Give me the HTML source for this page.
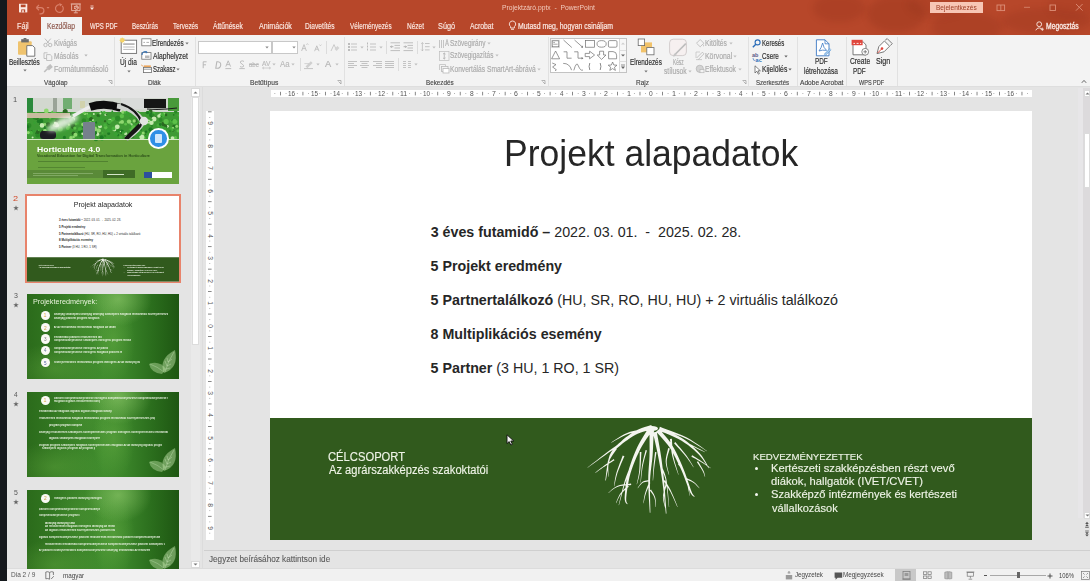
<!DOCTYPE html>
<html><head><meta charset="utf-8">
<style>
*{margin:0;padding:0;box-sizing:border-box}
html,body{width:1090px;height:581px;overflow:hidden;background:#e6e6e6;font-family:"Liberation Sans",sans-serif}
body{position:relative}
.a{position:absolute;white-space:pre}
svg.a{overflow:visible}
</style></head><body>
<div class="a" style="left:0px;top:0px;width:7px;height:581px;background:#15191d"></div>
<div class="a" style="left:7px;top:0px;width:1083px;height:35px;background:#b7472a"></div>
<div class="a" style="left:7px;top:35px;width:1083px;height:52px;background:#f3f3f3"></div>
<div class="a" style="left:7px;top:86px;width:1083px;height:1px;background:#dedede"></div>
<div class="a" style="left:7px;top:87px;width:1083px;height:482px;background:#e4e4e4"></div>
<div class="a" style="left:7px;top:569px;width:1083px;height:12px;background:#f1f1f1"></div>
<div class="a" style="left:7px;top:568px;width:1083px;height:1px;background:#dcdcdc"></div>
<div class="a" style="left:7px;top:0;width:1083px;height:35px;overflow:hidden"><div class="a" style="left:806px;top:-6px;width:52px;height:28px;border-radius:50%;background:rgba(110,25,8,0.13);filter:blur(3px)"></div><div class="a" style="left:860px;top:-4px;width:58px;height:36px;border-radius:50%;background:rgba(110,25,8,0.15);filter:blur(3px)"></div><div class="a" style="left:925px;top:12px;width:70px;height:30px;border-radius:50%;background:rgba(110,25,8,0.12);filter:blur(3px)"></div><div class="a" style="left:900px;top:-8px;width:60px;height:26px;border-radius:50%;background:rgba(110,25,8,0.10);filter:blur(3px)"></div><div class="a" style="left:995px;top:8px;width:90px;height:26px;border-radius:50%;background:rgba(110,25,8,0.12);filter:blur(3px)"></div><div class="a" style="left:1040px;top:-10px;width:50px;height:30px;border-radius:50%;background:rgba(110,25,8,0.08);filter:blur(3px)"></div></div>
<svg class="a" style="left:18px;top:3px;" width="11" height="11" viewBox="0 0 11 11"><rect x="1" y="0.8" width="8.3" height="8.6" fill="#fbe9e3"/><rect x="2.8" y="1.6" width="4.8" height="2.6" fill="#b7472a"/><rect x="3.2" y="6.4" width="4" height="3" fill="#b7472a"/><rect x="4.2" y="7.2" width="1.6" height="2.2" fill="#fbe9e3"/></svg>
<svg class="a" style="left:34px;top:3px;" width="12" height="11" viewBox="0 0 12 11"><path d="M2.2 4.6 L5 2 M2.2 4.6 L5 7.2 M2.4 4.6 H6.8 A3 3 0 0 1 6.8 10.8 H5.5" stroke="#d9806a" stroke-width="1.2" fill="none"/></svg>
<svg class="a" style="left:46px;top:6px;" width="4" height="4" viewBox="0 0 4 4"><path d="M0.5 1 H3.5 L2 2.8Z" fill="#d9806a"/></svg>
<svg class="a" style="left:54px;top:3px;" width="11" height="11" viewBox="0 0 11 11"><path d="M8.2 2.8 A3.9 3.9 0 1 1 5.5 1.6" stroke="#d9806a" stroke-width="1.2" fill="none"/><path d="M5.2 0 L8.4 1.4 L6 3.6Z" fill="#d9806a"/></svg>
<svg class="a" style="left:70px;top:3px;" width="12" height="11" viewBox="0 0 12 11"><path d="M0.8 1 H10.8" stroke="#f6d8ce" stroke-width="0.9"/><path d="M1.6 1.4 V7.6 H10 V1.4" fill="none" stroke="#f6d8ce" stroke-width="0.7"/><circle cx="6.6" cy="4.6" r="1.8" fill="none" stroke="#f6d8ce" stroke-width="0.8"/><path d="M6.6 4.6 L6.6 2.8 M6.6 4.6 L8.2 4.6" stroke="#f6d8ce" stroke-width="0.6"/><path d="M4 3.5 H5 M4 5.5 H5" stroke="#f6d8ce" stroke-width="0.6"/><path d="M5.8 7.6 V9.4 M3.8 9.8 H7.8" stroke="#f6d8ce" stroke-width="0.7"/></svg>
<svg class="a" style="left:89px;top:5px;" width="6" height="6" viewBox="0 0 6 6"><path d="M1.5 1 H4.5" stroke="#fbe9e3" stroke-width="0.8"/><path d="M1 2.6 H5 L3 5Z" fill="#fbe9e3"/></svg>
<div class="a" style="left:502.46px;top:2.59px;font-size:7.6px;line-height:10px;color:#f3cdbf;transform:scaleX(0.8884);transform-origin:0 0;">Projektzáró.pptx  -  PowerPoint</div>
<div class="a" style="left:930px;top:2px;width:53px;height:11px;background:#f7c6b5"></div>
<div class="a" style="left:935.98px;top:2.59px;font-size:7.6px;line-height:10px;color:#9c3b22;transform:scaleX(0.8600);transform-origin:0 0;">Bejelentkezés</div>
<svg class="a" style="left:996px;top:4px;" width="10" height="8" viewBox="0 0 10 8"><rect x="1" y="1" width="7.6" height="5.6" fill="none" stroke="#dc8f78" stroke-width="0.9"/><path d="M4.8 1 V6.6" stroke="#dc8f78" stroke-width="0.9"/></svg>
<svg class="a" style="left:1023px;top:6px;" width="9" height="3" viewBox="0 0 9 3"><path d="M1 1.3 H7" stroke="#d98a74" stroke-width="0.8"/></svg>
<svg class="a" style="left:1049px;top:4px;" width="8" height="8" viewBox="0 0 8 8"><rect x="1" y="1" width="5.5" height="5.5" fill="none" stroke="#dc8f78" stroke-width="0.9"/></svg>
<svg class="a" style="left:1075px;top:3px;" width="9" height="9" viewBox="0 0 9 9"><path d="M1 1 L7.6 7.6 M7.6 1 L1 7.6" stroke="#dc8f78" stroke-width="0.9"/></svg>
<svg class="a" style="left:1035px;top:21px;" width="10" height="10" viewBox="0 0 10 10"><circle cx="4.2" cy="3.2" r="2.4" fill="none" stroke="#f6dcd3" stroke-width="1"/><path d="M0.8 9.3 A3.6 3.6 0 0 1 7.6 9.3" fill="none" stroke="#f6dcd3" stroke-width="1"/><path d="M7.3 6.6 V9.8 M5.7 8.2 H8.9" stroke="#f6dcd3" stroke-width="0.9"/></svg>
<div class="a" style="left:1046.46px;top:20.69px;font-size:8.2px;line-height:11px;color:#fbeee9;transform:scaleX(0.8250);transform-origin:0 0;-webkit-text-stroke:0.3px currentColor;">Megosztás</div>
<div class="a" style="left:41px;top:17px;width:41px;height:18px;background:#f3f3f3"></div>
<div class="a" style="left:16.92px;top:20.59px;font-size:8.4px;line-height:11px;color:#fbe9e3;transform:scaleX(0.8665);transform-origin:0 0;-webkit-text-stroke:0.15px currentColor;">Fájl</div>
<div class="a" style="left:89.90px;top:20.59px;font-size:8.4px;line-height:11px;color:#fbe9e3;transform:scaleX(0.7190);transform-origin:0 0;-webkit-text-stroke:0.15px currentColor;">WPS PDF</div>
<div class="a" style="left:131.80px;top:20.59px;font-size:8.4px;line-height:11px;color:#fbe9e3;transform:scaleX(0.7448);transform-origin:0 0;-webkit-text-stroke:0.15px currentColor;">Beszúrás</div>
<div class="a" style="left:173.27px;top:20.59px;font-size:8.4px;line-height:11px;color:#fbe9e3;transform:scaleX(0.7535);transform-origin:0 0;-webkit-text-stroke:0.15px currentColor;">Tervezés</div>
<div class="a" style="left:213.40px;top:20.59px;font-size:8.4px;line-height:11px;color:#fbe9e3;transform:scaleX(0.7999);transform-origin:0 0;-webkit-text-stroke:0.15px currentColor;">Áttűnések</div>
<div class="a" style="left:258.50px;top:20.59px;font-size:8.4px;line-height:11px;color:#fbe9e3;transform:scaleX(0.8522);transform-origin:0 0;-webkit-text-stroke:0.15px currentColor;">Animációk</div>
<div class="a" style="left:305.47px;top:20.59px;font-size:8.4px;line-height:11px;color:#fbe9e3;transform:scaleX(0.7955);transform-origin:0 0;-webkit-text-stroke:0.15px currentColor;">Diavetítés</div>
<div class="a" style="left:350.00px;top:20.59px;font-size:8.4px;line-height:11px;color:#fbe9e3;transform:scaleX(0.7566);transform-origin:0 0;-webkit-text-stroke:0.15px currentColor;">Véleményezés</div>
<div class="a" style="left:406.98px;top:20.59px;font-size:8.4px;line-height:11px;color:#fbe9e3;transform:scaleX(0.7795);transform-origin:0 0;-webkit-text-stroke:0.15px currentColor;">Nézet</div>
<div class="a" style="left:438.13px;top:20.59px;font-size:8.4px;line-height:11px;color:#fbe9e3;transform:scaleX(0.8730);transform-origin:0 0;-webkit-text-stroke:0.15px currentColor;">Súgó</div>
<div class="a" style="left:470.00px;top:20.59px;font-size:8.4px;line-height:11px;color:#fbe9e3;transform:scaleX(0.8133);transform-origin:0 0;-webkit-text-stroke:0.15px currentColor;">Acrobat</div>
<div class="a" style="left:47.16px;top:20.59px;font-size:8.4px;line-height:11px;color:#8c5448;transform:scaleX(0.7995);transform-origin:0 0;-webkit-text-stroke:0.15px currentColor;">Kezdőlap</div>
<svg class="a" style="left:508px;top:20px;" width="9" height="11" viewBox="0 0 9 11"><path d="M4.4 1 A3.1 3.1 0 0 1 6.4 6.6 V8 H2.6 V6.6 A3.1 3.1 0 0 1 4.4 1Z" fill="none" stroke="#fbe9e3" stroke-width="0.9"/><path d="M3 9.3 H6" stroke="#fbe9e3" stroke-width="0.9"/></svg>
<div class="a" style="left:517.85px;top:20.59px;font-size:8.4px;line-height:11px;color:#fbe9e3;transform:scaleX(0.8230);transform-origin:0 0;-webkit-text-stroke:0.2px currentColor;">Mutasd meg, hogyan csináljam</div>
<div class="a" style="left:114px;top:37px;width:1px;height:49px;background:#e1e1e1"></div>
<div class="a" style="left:194.5px;top:37px;width:1px;height:49px;background:#e1e1e1"></div>
<div class="a" style="left:343.6px;top:37px;width:1px;height:49px;background:#e1e1e1"></div>
<div class="a" style="left:547.5px;top:37px;width:1px;height:49px;background:#e1e1e1"></div>
<div class="a" style="left:747.5px;top:37px;width:1px;height:49px;background:#e1e1e1"></div>
<div class="a" style="left:797px;top:37px;width:1px;height:49px;background:#e1e1e1"></div>
<div class="a" style="left:846px;top:37px;width:1px;height:49px;background:#e1e1e1"></div>
<div class="a" style="left:897px;top:37px;width:1px;height:49px;background:#e1e1e1"></div>
<div class="a" style="left:44.30px;top:76.69px;font-size:8.1px;line-height:11px;color:#484848;transform:scaleX(0.7924);transform-origin:0 0;-webkit-text-stroke:0.18px currentColor;">Vágólap</div>
<div class="a" style="left:147.99px;top:76.69px;font-size:8.1px;line-height:11px;color:#484848;transform:scaleX(0.7909);transform-origin:0 0;-webkit-text-stroke:0.18px currentColor;">Diák</div>
<div class="a" style="left:250.16px;top:76.69px;font-size:8.1px;line-height:11px;color:#484848;transform:scaleX(0.8260);transform-origin:0 0;-webkit-text-stroke:0.18px currentColor;">Betűtípus</div>
<div class="a" style="left:426.20px;top:76.69px;font-size:8.1px;line-height:11px;color:#484848;transform:scaleX(0.7788);transform-origin:0 0;-webkit-text-stroke:0.18px currentColor;">Bekezdés</div>
<div class="a" style="left:636.18px;top:76.69px;font-size:8.1px;line-height:11px;color:#484848;transform:scaleX(0.7988);transform-origin:0 0;-webkit-text-stroke:0.18px currentColor;">Rajz</div>
<div class="a" style="left:756.20px;top:76.69px;font-size:8.1px;line-height:11px;color:#484848;transform:scaleX(0.7518);transform-origin:0 0;-webkit-text-stroke:0.18px currentColor;">Szerkesztés</div>
<div class="a" style="left:800.20px;top:76.69px;font-size:8.1px;line-height:11px;color:#484848;transform:scaleX(0.8180);transform-origin:0 0;-webkit-text-stroke:0.18px currentColor;">Adobe Acrobat</div>
<div class="a" style="left:859.20px;top:76.69px;font-size:8.1px;line-height:11px;color:#484848;transform:scaleX(0.6828);transform-origin:0 0;-webkit-text-stroke:0.18px currentColor;">WPS PDF</div>
<svg class="a" style="left:107.5px;top:80px;" width="5" height="5" viewBox="0 0 5 5"><path d="M0.5 0.5 H4 V4" fill="none" stroke="#9a9a9a" stroke-width="0.7"/><path d="M1.5 1.5 L4 4" stroke="#9a9a9a" stroke-width="0.7"/></svg>
<svg class="a" style="left:336.8px;top:80px;" width="5" height="5" viewBox="0 0 5 5"><path d="M0.5 0.5 H4 V4" fill="none" stroke="#9a9a9a" stroke-width="0.7"/><path d="M1.5 1.5 L4 4" stroke="#9a9a9a" stroke-width="0.7"/></svg>
<svg class="a" style="left:540.6px;top:80px;" width="5" height="5" viewBox="0 0 5 5"><path d="M0.5 0.5 H4 V4" fill="none" stroke="#9a9a9a" stroke-width="0.7"/><path d="M1.5 1.5 L4 4" stroke="#9a9a9a" stroke-width="0.7"/></svg>
<svg class="a" style="left:741.8px;top:80px;" width="5" height="5" viewBox="0 0 5 5"><path d="M0.5 0.5 H4 V4" fill="none" stroke="#9a9a9a" stroke-width="0.7"/><path d="M1.5 1.5 L4 4" stroke="#9a9a9a" stroke-width="0.7"/></svg>
<svg class="a" style="left:16px;top:37px;" width="21" height="21" viewBox="0 0 21 21"><rect x="2" y="4.3" width="13.7" height="13.4" rx="1" fill="#efc36e"/><rect x="5.2" y="2.2" width="7.6" height="3.2" fill="#6c6c6c"/><rect x="7.6" y="1" width="2.8" height="1.6" fill="#6c6c6c"/><path d="M10.8 8.6 H16.6 L18.8 10.8 V19.2 H10.8Z" fill="#fff" stroke="#6a6a6a" stroke-width="0.9"/></svg>
<div class="a" style="left:9.48px;top:56.89px;font-size:8.5px;line-height:11px;color:#303030;transform:scaleX(0.7583);transform-origin:0 0;-webkit-text-stroke:0.18px currentColor;">Beillesztés</div>
<svg class="a" style="left:23px;top:69.3px;" width="4" height="3" viewBox="0 0 4 3"><path d="M0.3 0.6 H3.7 L2 2.5Z" fill="#777"/></svg>
<svg class="a" style="left:43px;top:38px;" width="10" height="10" viewBox="0 0 10 10"><circle cx="2.5" cy="7" r="1.7" fill="none" stroke="#b5b5b5" stroke-width="0.9"/><circle cx="7.2" cy="7" r="1.7" fill="none" stroke="#b5b5b5" stroke-width="0.9"/><path d="M3.5 5.6 L7.8 0.6 M6.2 5.6 L1.9 0.6" stroke="#b5b5b5" stroke-width="0.9"/></svg>
<div class="a" style="left:53.89px;top:37.99px;font-size:8.5px;line-height:11px;color:#ababab;transform:scaleX(0.7570);transform-origin:0 0;-webkit-text-stroke:0.18px currentColor;">Kivágás</div>
<svg class="a" style="left:43px;top:52px;" width="10" height="9" viewBox="0 0 10 9"><path d="M1 0.8 V6.5 H3.5 M1 0.8 H4.5" fill="none" stroke="#b5b5b5" stroke-width="0.8"/><path d="M3.6 2.6 H7.2 L8.8 4.2 V8.5 H3.6Z" fill="none" stroke="#b5b5b5" stroke-width="0.8"/></svg>
<div class="a" style="left:53.87px;top:50.69px;font-size:8.5px;line-height:11px;color:#ababab;transform:scaleX(0.7724);transform-origin:0 0;-webkit-text-stroke:0.18px currentColor;">Másolás</div>
<svg class="a" style="left:83.6px;top:54.4px;" width="4" height="3" viewBox="0 0 4 3"><path d="M0.3 0.6 H3.7 L2 2.5Z" fill="#b5b5b5"/></svg>
<svg class="a" style="left:43px;top:64px;" width="10" height="9" viewBox="0 0 10 9"><path d="M1.2 8 L4.6 4.6" stroke="#c0c0c0" stroke-width="1.6"/><rect x="4" y="1.2" width="5.2" height="4" transform="rotate(-40 6.6 3.2)" fill="#c0c0c0"/></svg>
<div class="a" style="left:53.84px;top:63.79px;font-size:8.5px;line-height:11px;color:#ababab;transform:scaleX(0.8232);transform-origin:0 0;-webkit-text-stroke:0.18px currentColor;">Formátummásoló</div>
<svg class="a" style="left:119px;top:37px;" width="19" height="18" viewBox="0 0 19 18"><rect x="2.2" y="3.2" width="15.4" height="13.2" fill="#fff" stroke="#6f6f6f" stroke-width="0.9"/><rect x="4.2" y="6.2" width="11.4" height="1.8" fill="#b9b9b9"/><path d="M4.2 10 H15.6 M4.2 12.4 H15.6" stroke="#a9a9a9" stroke-width="0.8"/><circle cx="3.3" cy="3.3" r="2.2" fill="#f5cf5b"/><path d="M3.3 0 V6.6 M0 3.3 H6.6 M1 1 L5.6 5.6 M5.6 1 L1 5.6" stroke="#f5d775" stroke-width="0.5"/></svg>
<div class="a" style="left:120.24px;top:56.99px;font-size:8.5px;line-height:11px;color:#303030;transform:scaleX(0.7749);transform-origin:0 0;-webkit-text-stroke:0.18px currentColor;">Új dia</div>
<svg class="a" style="left:126.6px;top:69.5px;" width="4" height="3" viewBox="0 0 4 3"><path d="M0.3 0.6 H3.7 L2 2.5Z" fill="#777"/></svg>
<svg class="a" style="left:141px;top:38px;" width="11" height="9" viewBox="0 0 11 9"><rect x="0.8" y="0.8" width="9.2" height="7" fill="#fff" stroke="#707070" stroke-width="0.8"/><path d="M2.4 4.4 H4 M5.4 4.4 H8" stroke="#9a9a9a" stroke-width="0.8"/></svg>
<div class="a" style="left:152.49px;top:37.69px;font-size:8.5px;line-height:11px;color:#303030;transform:scaleX(0.7458);transform-origin:0 0;-webkit-text-stroke:0.18px currentColor;">Elrendezés</div>
<svg class="a" style="left:185.2px;top:41.7px;" width="4" height="3" viewBox="0 0 4 3"><path d="M0.3 0.6 H3.7 L2 2.5Z" fill="#777"/></svg>
<svg class="a" style="left:141px;top:51px;" width="11" height="9" viewBox="0 0 11 9"><rect x="0.8" y="1.6" width="9.2" height="6.6" fill="#fff" stroke="#707070" stroke-width="0.8"/><path d="M1 4 A3 3 0 0 1 6 1.5" fill="none" stroke="#3b77b8" stroke-width="1.1"/><path d="M5.2 0 L6.8 1.6 L4.8 2.6Z" fill="#3b77b8"/><rect x="4" y="4.5" width="4.5" height="2.5" fill="#b9b9b9"/></svg>
<div class="a" style="left:153.00px;top:50.89px;font-size:8.5px;line-height:11px;color:#303030;transform:scaleX(0.7912);transform-origin:0 0;-webkit-text-stroke:0.18px currentColor;">Alaphelyzet</div>
<svg class="a" style="left:141px;top:64px;" width="11" height="9" viewBox="0 0 11 9"><rect x="2.4" y="3.4" width="8" height="5.2" fill="#fff" stroke="#707070" stroke-width="0.8"/><path d="M2.4 5.2 H10.4" stroke="#707070" stroke-width="0.7"/><rect x="2.8" y="1.4" width="7" height="1.6" fill="#eba55a"/><path d="M0 0.8 L2.4 2.4" stroke="#e8a25c" stroke-width="0.8"/></svg>
<div class="a" style="left:152.70px;top:63.69px;font-size:8.5px;line-height:11px;color:#303030;transform:scaleX(0.7033);transform-origin:0 0;-webkit-text-stroke:0.18px currentColor;">Szakasz</div>
<svg class="a" style="left:176.1px;top:67.7px;" width="4" height="3" viewBox="0 0 4 3"><path d="M0.3 0.6 H3.7 L2 2.5Z" fill="#777"/></svg>
<div class="a" style="left:197.5px;top:41.2px;width:74.3px;height:12.4px;background:#fff;border:1px solid #c8c8c8"></div>
<div class="a" style="left:272.2px;top:41.2px;width:26.3px;height:12.4px;background:#fff;border:1px solid #c8c8c8"></div>
<svg class="a" style="left:265.2px;top:45.8px;" width="4" height="3" viewBox="0 0 4 3"><path d="M0.3 0.6 H3.7 L2 2.5Z" fill="#8a8a8a"/></svg>
<svg class="a" style="left:291.8px;top:45.8px;" width="4" height="3" viewBox="0 0 4 3"><path d="M0.3 0.6 H3.7 L2 2.5Z" fill="#8a8a8a"/></svg>
<svg class="a" style="left:301px;top:43px;" width="8" height="9" viewBox="0 0 8 9"><path d="M0.6 8 L3 1.6 L5.4 8 M1.6 5.6 H4.4" fill="none" stroke="#bdbdbd" stroke-width="0.9"/><path d="M5.4 1.8 L6.4 0.6 L7.4 1.8" fill="none" stroke="#bdbdbd" stroke-width="0.7"/></svg>
<svg class="a" style="left:314px;top:44px;" width="8" height="8" viewBox="0 0 8 8"><path d="M0.6 7.2 L2.8 1.8 L5 7.2 M1.5 5.2 H4.1" fill="none" stroke="#bdbdbd" stroke-width="0.9"/><path d="M5.4 0.6 L6.4 1.8 L7.4 0.6" fill="none" stroke="#bdbdbd" stroke-width="0.7"/></svg>
<div class="a" style="left:325.7px;top:41px;width:1px;height:13px;background:#dcdcdc"></div>
<svg class="a" style="left:330px;top:43px;" width="10" height="9" viewBox="0 0 10 9"><path d="M1 8 L4 1.6 L6 6" fill="none" stroke="#c5c5c5" stroke-width="0.9"/><path d="M4.5 6 L7.4 3 L9.4 5 L6.6 8Z" fill="#d3d3d3"/></svg>
<svg class="a" style="left:201.5px;top:61px;" width="6" height="8" viewBox="0 0 6 8"><path d="M1.2 7.2 V0.8 H4.6 M1.2 3.8 H4" fill="none" stroke="#b8b8b8" stroke-width="1"/></svg>
<svg class="a" style="left:213.5px;top:61px;" width="7" height="8" viewBox="0 0 7 8"><path d="M1.8 7.2 L2.8 0.8 H4 A3 3.2 0 0 1 3.4 7.2Z" fill="none" stroke="#b8b8b8" stroke-width="1.1"/></svg>
<svg class="a" style="left:225px;top:60px;" width="8" height="10" viewBox="0 0 8 10"><path d="M0.8 6.6 L3.2 0.8 L5.6 6.6 M1.6 4.6 H4.8 M0.4 8.6 H6.2" fill="none" stroke="#b8b8b8" stroke-width="0.9"/></svg>
<svg class="a" style="left:238.5px;top:60px;" width="7" height="10" viewBox="0 0 7 10"><path d="M5 1.4 Q3 0.2 1.6 1.4 Q0.6 3 3 4 Q5.4 5.2 4.4 6.6 Q3 7.6 1 6.6 M0.4 8.6 H5.8" fill="none" stroke="#b8b8b8" stroke-width="0.9"/></svg>
<div class="a" style="left:248.76px;top:60.39px;font-size:8.0px;line-height:10px;color:#bbbbbb;transform:scaleX(0.7549);transform-origin:0 0;-webkit-text-stroke:0.18px currentColor;text-decoration:line-through">abc</div>
<div class="a" style="left:262.20px;top:58.89px;font-size:7px;line-height:9px;color:#bbbbbb;transform:scaleX(0.9371);transform-origin:0 0;-webkit-text-stroke:0.18px currentColor;">AV</div>
<svg class="a" style="left:262px;top:66px;" width="9" height="4" viewBox="0 0 9 4"><path d="M0.5 2 H8.5 M0.5 2 L2 0.8 M0.5 2 L2 3.2 M8.5 2 L7 0.8 M8.5 2 L7 3.2" fill="none" stroke="#bbbbbb" stroke-width="0.6"/></svg>
<svg class="a" style="left:272.1px;top:63.099999999999994px;" width="4" height="3" viewBox="0 0 4 3"><path d="M0.3 0.6 H3.7 L2 2.5Z" fill="#c0c0c0"/></svg>
<div class="a" style="left:280.30px;top:59.09px;font-size:8.5px;line-height:11px;color:#bbbbbb;transform:scaleX(0.9278);transform-origin:0 0;-webkit-text-stroke:0.18px currentColor;">Aa</div>
<svg class="a" style="left:291.4px;top:63.099999999999994px;" width="4" height="3" viewBox="0 0 4 3"><path d="M0.3 0.6 H3.7 L2 2.5Z" fill="#c0c0c0"/></svg>
<div class="a" style="left:299.6px;top:58px;width:1px;height:13px;background:#dcdcdc"></div>
<svg class="a" style="left:303px;top:59px;" width="11" height="11" viewBox="0 0 11 11"><path d="M1 9.6 H10" stroke="#c4c4c4" stroke-width="1"/><path d="M2.5 7.4 L7.8 2.2 L9.6 4 L4.4 9.2Z" fill="#cfcfcf"/><path d="M1.4 4.6 H6" stroke="#c9c9c9" stroke-width="0.8"/></svg>
<svg class="a" style="left:315.9px;top:63.099999999999994px;" width="4" height="3" viewBox="0 0 4 3"><path d="M0.3 0.6 H3.7 L2 2.5Z" fill="#c0c0c0"/></svg>
<div class="a" style="left:325.00px;top:59.09px;font-size:8.6px;line-height:11px;color:#b5b5b5;transform:scaleX(1.0760);transform-origin:0 0;-webkit-text-stroke:0.18px currentColor;">A</div>
<svg class="a" style="left:335.2px;top:63.099999999999994px;" width="4" height="3" viewBox="0 0 4 3"><path d="M0.3 0.6 H3.7 L2 2.5Z" fill="#c0c0c0"/></svg>
<svg class="a" style="left:348px;top:42px;" width="9" height="10" viewBox="0 0 9 10"><rect x="0" y="1" width="2" height="2" fill="#bdbdbd"/><rect x="3" y="1.5" width="6" height="1" fill="#c4c4c4"/><rect x="0" y="4" width="2" height="2" fill="#bdbdbd"/><rect x="3" y="4.5" width="6" height="1" fill="#c4c4c4"/><rect x="0" y="7" width="2" height="2" fill="#bdbdbd"/><rect x="3" y="7.5" width="6" height="1" fill="#c4c4c4"/></svg>
<svg class="a" style="left:359.6px;top:45.5px;" width="4" height="3" viewBox="0 0 4 3"><path d="M0.3 0.6 H3.7 L2 2.5Z" fill="#c0c0c0"/></svg>
<svg class="a" style="left:367px;top:42px;" width="9" height="10" viewBox="0 0 9 10"><rect x="0" y="0.5" width="1" height="2" fill="#b9b9b9"/><rect x="3" y="1.5" width="6" height="1" fill="#c4c4c4"/><rect x="0" y="3.5" width="1" height="2" fill="#b9b9b9"/><rect x="3" y="4.5" width="6" height="1" fill="#c4c4c4"/><rect x="0" y="6.5" width="1" height="2" fill="#b9b9b9"/><rect x="3" y="7.5" width="6" height="1" fill="#c4c4c4"/></svg>
<svg class="a" style="left:378.5px;top:45.5px;" width="4" height="3" viewBox="0 0 4 3"><path d="M0.3 0.6 H3.7 L2 2.5Z" fill="#c0c0c0"/></svg>
<div class="a" style="left:386.2px;top:41px;width:1px;height:13px;background:#dcdcdc"></div>
<svg class="a" style="left:390.3px;top:42px;" width="11" height="10" viewBox="0 0 11 10"><path d="M0.5 0.8 H10 M4.5 3.4 H10 M4.5 6 H10 M0.5 8.6 H10" stroke="#b8b8b8" stroke-width="0.9"/><path d="M3.4 4.7 L0.6 4.7 M1.6 3.6 L0.6 4.7 L1.6 5.8" fill="none" stroke="#a0a0a0" stroke-width="0.8"/></svg>
<svg class="a" style="left:403px;top:42px;" width="11" height="10" viewBox="0 0 11 10"><path d="M0.5 0.8 H10 M4.5 3.4 H10 M4.5 6 H10 M0.5 8.6 H10" stroke="#b8b8b8" stroke-width="0.9"/><path d="M0.6 4.7 L3.4 4.7 M2.4 3.6 L3.4 4.7 L2.4 5.8" fill="none" stroke="#a0a0a0" stroke-width="0.8"/></svg>
<div class="a" style="left:417px;top:41px;width:1px;height:13px;background:#dcdcdc"></div>
<svg class="a" style="left:421px;top:42px;" width="9" height="10" viewBox="0 0 9 10"><path d="M1.4 0.6 V8.8 M0.2 1.8 L1.4 0.6 L2.6 1.8 M0.2 7.6 L1.4 8.8 L2.6 7.6" fill="none" stroke="#b5b5b5" stroke-width="0.7"/><path d="M4 1.5 H8.6 M4 4.7 H8.6 M4 7.9 H8.6" stroke="#bdbdbd" stroke-width="0.9"/></svg>
<svg class="a" style="left:432px;top:45.5px;" width="4" height="3" viewBox="0 0 4 3"><path d="M0.3 0.6 H3.7 L2 2.5Z" fill="#c0c0c0"/></svg>
<svg class="a" style="left:348px;top:61px;" width="9" height="8" viewBox="0 0 9 8"><rect x="0" y="0" width="9" height="1" fill="#c2c2c2"/><rect x="0" y="2" width="6" height="1" fill="#c2c2c2"/><rect x="0" y="4" width="9" height="1" fill="#c2c2c2"/><rect x="0" y="6" width="6" height="1" fill="#c2c2c2"/></svg>
<svg class="a" style="left:360px;top:61px;" width="9" height="8" viewBox="0 0 9 8"><rect x="0" y="0" width="9" height="1" fill="#c2c2c2"/><rect x="1.5" y="2" width="6.0" height="1" fill="#c2c2c2"/><rect x="0" y="4" width="9" height="1" fill="#c2c2c2"/><rect x="1.5" y="6" width="6.0" height="1" fill="#c2c2c2"/></svg>
<svg class="a" style="left:373px;top:61px;" width="9" height="8" viewBox="0 0 9 8"><rect x="0" y="0" width="9" height="1" fill="#c2c2c2"/><rect x="3" y="2" width="6" height="1" fill="#c2c2c2"/><rect x="0" y="4" width="9" height="1" fill="#c2c2c2"/><rect x="3" y="6" width="6" height="1" fill="#c2c2c2"/></svg>
<svg class="a" style="left:385px;top:61px;" width="9" height="8" viewBox="0 0 9 8"><rect x="0" y="0" width="9" height="1" fill="#c2c2c2"/><rect x="0" y="2" width="9" height="1" fill="#c2c2c2"/><rect x="0" y="4" width="9" height="1" fill="#c2c2c2"/><rect x="0" y="6" width="9" height="1" fill="#c2c2c2"/></svg>
<div class="a" style="left:398.2px;top:58px;width:1px;height:13px;background:#dcdcdc"></div>
<svg class="a" style="left:403px;top:61px;" width="8" height="8" viewBox="0 0 8 8"><rect x="0" y="0" width="3" height="1" fill="#c4c4c4"/><rect x="0" y="2" width="3" height="1" fill="#c4c4c4"/><rect x="0" y="4" width="3" height="1" fill="#c4c4c4"/><rect x="0" y="6" width="3" height="1" fill="#c4c4c4"/><rect x="5" y="0" width="3" height="1" fill="#c4c4c4"/><rect x="5" y="2" width="3" height="1" fill="#c4c4c4"/><rect x="5" y="4" width="3" height="1" fill="#c4c4c4"/><rect x="5" y="6" width="3" height="1" fill="#c4c4c4"/></svg>
<svg class="a" style="left:413.5px;top:63.099999999999994px;" width="4" height="3" viewBox="0 0 4 3"><path d="M0.3 0.6 H3.7 L2 2.5Z" fill="#c0c0c0"/></svg>
<svg class="a" style="left:439px;top:38px;" width="11" height="11" viewBox="0 0 11 11"><rect x="0" y="2" width="1" height="8" fill="#c4c4c4"/><rect x="2" y="2" width="1" height="8" fill="#c4c4c4"/><rect x="4" y="2" width="1" height="8" fill="#c4c4c4"/><path d="M6.4 8 L8 1.4 L9.6 8 M6.9 5.8 H9.1" fill="none" stroke="#b5b5b5" stroke-width="0.8"/></svg>
<div class="a" style="left:450.08px;top:37.59px;font-size:8.5px;line-height:11px;color:#ababab;transform:scaleX(0.7577);transform-origin:0 0;-webkit-text-stroke:0.18px currentColor;">Szövegirány</div>
<svg class="a" style="left:487.3px;top:41.6px;" width="4" height="3" viewBox="0 0 4 3"><path d="M0.3 0.6 H3.7 L2 2.5Z" fill="#c0c0c0"/></svg>
<svg class="a" style="left:439px;top:51px;" width="11" height="10" viewBox="0 0 11 10"><rect x="0.6" y="0.6" width="9.4" height="8.8" fill="none" stroke="#bdbdbd" stroke-width="0.7"/><path d="M5.3 2 V8 M4 3.2 L5.3 2 L6.6 3.2 M4 6.8 L5.3 8 L6.6 6.8" fill="none" stroke="#a8a8a8" stroke-width="0.7"/></svg>
<div class="a" style="left:450.08px;top:50.29px;font-size:8.5px;line-height:11px;color:#ababab;transform:scaleX(0.7515);transform-origin:0 0;-webkit-text-stroke:0.18px currentColor;">Szövegigazítás</div>
<svg class="a" style="left:495px;top:54.3px;" width="4" height="3" viewBox="0 0 4 3"><path d="M0.3 0.6 H3.7 L2 2.5Z" fill="#c0c0c0"/></svg>
<svg class="a" style="left:439px;top:64px;" width="11" height="10" viewBox="0 0 11 10"><path d="M0.5 0.5 H6.5 V2.5 M0.5 0.5 V6" fill="none" stroke="#c0c0c0" stroke-width="0.8"/><rect x="2.5" y="2.5" width="6.5" height="5" fill="#f3f3f3" stroke="#b8b8b8" stroke-width="0.8"/><rect x="4" y="4.5" width="6" height="4.5" fill="#fff" stroke="#b8b8b8" stroke-width="0.8"/></svg>
<div class="a" style="left:449.87px;top:63.79px;font-size:8.5px;line-height:11px;color:#ababab;transform:scaleX(0.7819);transform-origin:0 0;-webkit-text-stroke:0.18px currentColor;">Konvertálás SmartArt-ábrává</div>
<svg class="a" style="left:537.4px;top:67.8px;" width="4" height="3" viewBox="0 0 4 3"><path d="M0.3 0.6 H3.7 L2 2.5Z" fill="#c0c0c0"/></svg>
<div class="a" style="left:550px;top:38px;width:77px;height:35px;background:#fff"></div>
<div class="a" style="left:619px;top:38px;width:8px;height:35px;background:#f7f7f7"></div>
<div class="a" style="left:619px;top:38px;width:1px;height:35px;background:#d8d8d8"></div>
<div class="a" style="left:619px;top:50px;width:8px;height:1px;background:#dedede"></div>
<div class="a" style="left:619px;top:61px;width:8px;height:1px;background:#dedede"></div>
<div class="a" style="left:550px;top:38px;width:77px;height:35px;border:1px solid #c3c3c3"></div>
<svg class="a" style="left:620px;top:41px;" width="6" height="5" viewBox="0 0 6 5"><path d="M1 3.6 L3 1.4 L5 3.6Z" fill="#cfcfcf"/></svg>
<svg class="a" style="left:620px;top:53px;" width="6" height="5" viewBox="0 0 6 5"><path d="M1 1.4 H5 L3 3.6Z" fill="#666"/></svg>
<svg class="a" style="left:620px;top:64px;" width="6" height="7" viewBox="0 0 6 7"><path d="M1 1 H5" stroke="#666" stroke-width="0.7"/><path d="M1 2.6 H5 L3 5Z" fill="#666"/></svg>
<svg class="a" style="left:550px;top:38px;" width="70" height="35" viewBox="0 0 70 35"><rect x="1" y="1.6" width="9" height="8.5" fill="#e4e4e4"/><rect x="2.2" y="2.8" width="6.6" height="6" fill="#fff" stroke="#6d6d6d" stroke-width="0.7"/><path d="M3.2 4.4 H5 M3.2 6.2 H7.6" stroke="#6d6d6d" stroke-width="0.6"/><path d="M13.5 2 L21.8 9.5" stroke="#6d6d6d" stroke-width="0.7"/><path d="M24.5 2 L32.6 9.2" stroke="#6d6d6d" stroke-width="0.7"/><path d="M31 9.6 L33 9.8 L32.6 7.6Z" fill="#6d6d6d"/><rect x="35.6" y="2.6" width="9" height="6.6" fill="none" stroke="#6d6d6d" stroke-width="0.7"/><ellipse cx="51.6" cy="5.9" rx="4.6" ry="3.3" fill="none" stroke="#6d6d6d" stroke-width="0.7"/><rect x="58.4" y="2.6" width="8.6" height="6.6" rx="1.2" fill="none" stroke="#6d6d6d" stroke-width="0.7"/><path d="M1.6 20.799999999999997 L5.6 13.0 L9.6 20.799999999999997Z" fill="none" stroke="#6d6d6d" stroke-width="0.7"/><path d="M13.6 13.799999999999999 H17 V20.2 H21.6" fill="none" stroke="#6d6d6d" stroke-width="0.7"/><path d="M24.2 13.799999999999999 H28 V20.2 H32.2" fill="none" stroke="#6d6d6d" stroke-width="0.7"/><path d="M31.6 19.0 L33.4 20.2 L31.6 21.4Z" fill="#6d6d6d"/><path d="M35.2 15.399999999999999 H39.6 V13.2 L44.6 17.0 L39.6 20.799999999999997 V18.6 H35.2Z" fill="none" stroke="#6d6d6d" stroke-width="0.7"/><path d="M49.6 13.2 H53.6 V17.0 H56 L51.6 21.4 L47.2 17.0 H49.6Z" fill="none" stroke="#6d6d6d" stroke-width="0.7"/><path d="M58.6 13.6 H63 A4 3.6 0 0 1 66.6 17.2 V20.799999999999997 H58.6Z" fill="none" stroke="#6d6d6d" stroke-width="0.7"/><path d="M2.2 25.0 L6 26.599999999999998 L2.6 29.0 L6.4 31.799999999999997 L5 32.8" fill="none" stroke="#6d6d6d" stroke-width="0.7"/><path d="M13.2 25.4 Q19.6 25.2 21.6 32.2" fill="none" stroke="#6d6d6d" stroke-width="0.7"/><path d="M23.8 32.4 Q26.6 22.4 28.4 28.0 Q30.6 33.4 33 32.0" fill="none" stroke="#6d6d6d" stroke-width="0.7"/><path d="M39.8 25.0 Q38.4 28.4 39.8 32.0" fill="none" stroke="#6d6d6d" stroke-width="0.8"/><path d="M50.2 25.0 Q51.6 28.4 50.2 32.0" fill="none" stroke="#6d6d6d" stroke-width="0.8"/><path d="M62.6 24.0 L63.8 27.0 L67 27.2 L64.5 29.2 L65.4 32.4 L62.6 30.599999999999998 L59.8 32.4 L60.7 29.2 L58.2 27.2 L61.4 27.0Z" fill="none" stroke="#6d6d6d" stroke-width="0.7"/></svg>
<svg class="a" style="left:637px;top:38px;" width="19" height="19" viewBox="0 0 19 19"><rect x="4" y="4.4" width="11" height="10" fill="#f2c36b"/><rect x="1.2" y="1" width="6.4" height="6.6" fill="#fff" stroke="#6b6b6b" stroke-width="0.8"/><rect x="9.8" y="9.6" width="7.2" height="7.2" fill="#fff" stroke="#6b6b6b" stroke-width="0.8"/></svg>
<div class="a" style="left:629.79px;top:56.79px;font-size:8.5px;line-height:11px;color:#303030;transform:scaleX(0.7482);transform-origin:0 0;-webkit-text-stroke:0.18px currentColor;">Elrendezés</div>
<svg class="a" style="left:643.8px;top:69.8px;" width="4" height="3" viewBox="0 0 4 3"><path d="M0.3 0.6 H3.7 L2 2.5Z" fill="#777"/></svg>
<svg class="a" style="left:668px;top:38px;" width="21" height="20" viewBox="0 0 21 20"><rect x="1.6" y="1.2" width="16.8" height="16.4" rx="3.6" fill="#f6f0f0" stroke="#c9c3c3" stroke-width="0.8"/><path d="M7 16.5 L17.8 5.6" stroke="#bdbdbd" stroke-width="1.6"/><path d="M5.4 18.8 Q5 15.4 8 15.2 Q9.6 17.2 5.4 18.8Z" fill="#c6c6c6"/></svg>
<div class="a" style="left:673.32px;top:56.79px;font-size:8.5px;line-height:11px;color:#ababab;transform:scaleX(0.5629);transform-origin:0 0;-webkit-text-stroke:0.18px currentColor;">Kész</div>
<div class="a" style="left:664.00px;top:66.19px;font-size:8.5px;line-height:11px;color:#ababab;transform:scaleX(0.7808);transform-origin:0 0;-webkit-text-stroke:0.18px currentColor;">stílusok</div>
<svg class="a" style="left:688px;top:70.2px;" width="4" height="3" viewBox="0 0 4 3"><path d="M0.3 0.6 H3.7 L2 2.5Z" fill="#c0c0c0"/></svg>
<svg class="a" style="left:694.5px;top:38px;" width="10" height="10" viewBox="0 0 10 10"><path d="M1.5 5.2 L5.2 1.5 L8.8 5.2 L5.2 8.8Z" fill="none" stroke="#b8b8b8" stroke-width="0.8"/><path d="M8.6 6 Q9.6 8 8.6 8.8 Q7.6 8 8.6 6Z" fill="#bdbdbd"/></svg>
<div class="a" style="left:705.26px;top:37.59px;font-size:8.5px;line-height:11px;color:#ababab;transform:scaleX(0.7868);transform-origin:0 0;-webkit-text-stroke:0.18px currentColor;">Kitöltés</div>
<svg class="a" style="left:728.8px;top:41.6px;" width="4" height="3" viewBox="0 0 4 3"><path d="M0.3 0.6 H3.7 L2 2.5Z" fill="#c0c0c0"/></svg>
<svg class="a" style="left:694.5px;top:51px;" width="10" height="10" viewBox="0 0 10 10"><path d="M1 8.6 H7" stroke="#c0c0c0" stroke-width="0.8"/><path d="M1.6 7 L7.4 1.2 L9 2.8 L3.2 8.6" fill="none" stroke="#b8b8b8" stroke-width="0.8"/><path d="M1 1 H5 M1 1 V7" stroke="#c0c0c0" stroke-width="0.7"/></svg>
<div class="a" style="left:705.25px;top:50.69px;font-size:8.5px;line-height:11px;color:#ababab;transform:scaleX(0.8111);transform-origin:0 0;-webkit-text-stroke:0.18px currentColor;">Körvonal</div>
<svg class="a" style="left:733.3px;top:54.7px;" width="4" height="3" viewBox="0 0 4 3"><path d="M0.3 0.6 H3.7 L2 2.5Z" fill="#c0c0c0"/></svg>
<svg class="a" style="left:694.5px;top:64px;" width="10" height="10" viewBox="0 0 10 10"><circle cx="4.8" cy="4.8" r="3.6" fill="#d4d4d4" stroke="#b8b8b8" stroke-width="0.8"/><rect x="5" y="5.5" width="4" height="3.2" fill="#f3f3f3" stroke="#b8b8b8" stroke-width="0.7"/></svg>
<div class="a" style="left:705.27px;top:63.79px;font-size:8.5px;line-height:11px;color:#ababab;transform:scaleX(0.7826);transform-origin:0 0;-webkit-text-stroke:0.18px currentColor;">Effektusok</div>
<svg class="a" style="left:737.7px;top:67.8px;" width="4" height="3" viewBox="0 0 4 3"><path d="M0.3 0.6 H3.7 L2 2.5Z" fill="#c0c0c0"/></svg>
<svg class="a" style="left:751.8px;top:38.5px;" width="9" height="9" viewBox="0 0 9 9"><circle cx="5.6" cy="3.4" r="2.5" fill="none" stroke="#2a6cb8" stroke-width="1.1"/><path d="M3.8 5.2 L0.8 8.2" stroke="#2a6cb8" stroke-width="1.4"/></svg>
<div class="a" style="left:762.31px;top:37.59px;font-size:8.5px;line-height:11px;color:#303030;transform:scaleX(0.7138);transform-origin:0 0;-webkit-text-stroke:0.18px currentColor;">Keresés</div>
<svg class="a" style="left:751.5px;top:51.5px;" width="10" height="10" viewBox="0 0 10 10"><text x="0" y="5" font-size="5.5" font-family="Liberation Sans" fill="#5a5a8a" font-weight="bold">ab</text><text x="3.6" y="9.6" font-size="5.5" font-family="Liberation Sans" fill="#2a6cb8" font-weight="bold">ac</text><path d="M1 6 Q1 9 3.4 8.6" fill="none" stroke="#2a6cb8" stroke-width="0.6"/></svg>
<div class="a" style="left:762.48px;top:50.69px;font-size:8.5px;line-height:11px;color:#303030;transform:scaleX(0.7416);transform-origin:0 0;-webkit-text-stroke:0.18px currentColor;">Csere</div>
<svg class="a" style="left:784px;top:54.7px;" width="4" height="3" viewBox="0 0 4 3"><path d="M0.3 0.6 H3.7 L2 2.5Z" fill="#666"/></svg>
<svg class="a" style="left:753.5px;top:64.5px;" width="7" height="10" viewBox="0 0 7 10"><path d="M1 0.8 V8 L2.8 6.2 L4.4 9.2 L5.4 8.6 L4 5.8 L6.4 5.8Z" fill="#fff" stroke="#555" stroke-width="0.7"/></svg>
<div class="a" style="left:762.26px;top:63.79px;font-size:8.5px;line-height:11px;color:#303030;transform:scaleX(0.7984);transform-origin:0 0;-webkit-text-stroke:0.18px currentColor;">Kijelölés</div>
<svg class="a" style="left:788.2px;top:67.8px;" width="4" height="3" viewBox="0 0 4 3"><path d="M0.3 0.6 H3.7 L2 2.5Z" fill="#666"/></svg>
<svg class="a" style="left:814.5px;top:39px;" width="17" height="18" viewBox="0 0 17 18"><path d="M1.4 0.8 H10 L14 4.8 V16.8 H1.4Z" fill="#fff" stroke="#3b78c4" stroke-width="0.9"/><path d="M10 0.8 V4.8 H14" fill="none" stroke="#3b78c4" stroke-width="0.8"/><path d="M4 12 Q6.4 9 7.6 4 Q8.4 9 11.6 11.4 Q7 10.6 4 12Z" fill="none" stroke="#3b78c4" stroke-width="0.8"/><path d="M9.6 16 L15.6 10" stroke="#5a9ad8" stroke-width="2.2"/><path d="M9.6 16 L15.6 10" stroke="#fff" stroke-width="0.8"/></svg>
<div class="a" style="left:814.69px;top:56.49px;font-size:8.5px;line-height:11px;color:#303030;transform:scaleX(0.7509);transform-origin:0 0;-webkit-text-stroke:0.18px currentColor;">PDF</div>
<div class="a" style="left:804.21px;top:65.69px;font-size:8.5px;line-height:11px;color:#303030;transform:scaleX(0.7690);transform-origin:0 0;-webkit-text-stroke:0.18px currentColor;">létrehozása</div>
<svg class="a" style="left:851px;top:39px;" width="19" height="17" viewBox="0 0 19 17"><path d="M2 3 H12.2 L15 5.8 V15.8 H2Z" fill="#fff" stroke="#6b6b6b" stroke-width="0.9"/><rect x="0.6" y="0.8" width="11" height="5.4" fill="#e0473d"/><path d="M2.4 4.4 H4 M5.6 4.4 H7.6 M9 4.4 H10.2" stroke="#fff" stroke-width="0.9"/><circle cx="14.2" cy="12.8" r="3.4" fill="#fff" stroke="#6b6b6b" stroke-width="0.8"/><path d="M14.2 11 V14.6 M12.4 12.8 H16" stroke="#6b6b6b" stroke-width="0.8"/></svg>
<div class="a" style="left:849.66px;top:56.49px;font-size:8.5px;line-height:11px;color:#303030;transform:scaleX(0.7924);transform-origin:0 0;-webkit-text-stroke:0.18px currentColor;">Create</div>
<div class="a" style="left:853.29px;top:65.69px;font-size:8.5px;line-height:11px;color:#303030;transform:scaleX(0.7447);transform-origin:0 0;-webkit-text-stroke:0.18px currentColor;">PDF</div>
<svg class="a" style="left:875px;top:38px;" width="18" height="18" viewBox="0 0 18 18"><path d="M2 15.6 L3.8 8.6 L9.4 3 L14.6 8.2 L9 13.8Z" fill="#fff" stroke="#6b6b6b" stroke-width="0.9"/><path d="M10.2 2.2 L12.2 0.6 L17.2 5.6 L15.4 7.6" fill="none" stroke="#6b6b6b" stroke-width="0.9"/><path d="M2.6 15 L6.6 11" stroke="#e0473d" stroke-width="1"/><circle cx="7" cy="10.6" r="1.3" fill="#e0473d"/></svg>
<div class="a" style="left:876.14px;top:56.49px;font-size:8.5px;line-height:11px;color:#303030;transform:scaleX(0.8403);transform-origin:0 0;-webkit-text-stroke:0.18px currentColor;">Sign</div>
<svg class="a" style="left:1081px;top:79px;" width="6" height="5" viewBox="0 0 6 5"><path d="M0.8 3.8 L3 1.4 L5.2 3.8" fill="none" stroke="#555" stroke-width="0.9"/></svg>
<div class="a" style="left:201.5px;top:87px;width:1px;height:482px;background:#dcdcdc"></div>
<div class="a" style="left:191px;top:88px;width:8.5px;height:480px;background:#e9e9e9"></div>
<div class="a" style="left:191px;top:88.3px;width:8.5px;height:8.3px;background:#fff;border:1px solid #dadada"></div>
<svg class="a" style="left:192px;top:89px;" width="7" height="7" viewBox="0 0 7 7"><path d="M1.5 4.6 L3.5 2.4 L5.5 4.6Z" fill="#777"/></svg>
<div class="a" style="left:191.5px;top:97px;width:7.5px;height:248px;background:#fff;border:1px solid #dcdcdc"></div>
<div class="a" style="left:191px;top:560.5px;width:8.5px;height:7.5px;background:#fff;border:1px solid #dadada"></div>
<svg class="a" style="left:192px;top:561px;" width="7" height="7" viewBox="0 0 7 7"><path d="M1.5 2.4 H5.5 L3.5 4.6Z" fill="#777"/></svg>
<div class="a" style="left:1083px;top:88px;width:7px;height:430px;background:#dcdadc"></div>
<div class="a" style="left:1078px;top:88px;width:5px;height:430px;background:#e7e6e8"></div>
<div class="a" style="left:1083.5px;top:89.5px;width:6.5px;height:7.5px;background:#fff;border:1px solid #dadada"></div>
<svg class="a" style="left:1083.5px;top:90px;" width="7" height="7" viewBox="0 0 7 7"><path d="M1.5 4.6 L3.5 2.4 L5.5 4.6Z" fill="#777"/></svg>
<div class="a" style="left:1083.5px;top:133.4px;width:6.5px;height:55px;background:#fff;border:1px solid #dcdcdc"></div>
<div class="a" style="left:1083.5px;top:511.5px;width:6.5px;height:7px;background:#fff;border:1px solid #dadada"></div>
<svg class="a" style="left:1083.5px;top:512px;" width="7" height="7" viewBox="0 0 7 7"><path d="M1.5 2.4 H5.5 L3.5 4.6Z" fill="#777"/></svg>
<svg class="a" style="left:1084px;top:521px;" width="6" height="8" viewBox="0 0 6 8"><path d="M3 0.8 L1.2 3 H4.8Z M3 3 L1.2 5.2 H4.8Z" fill="#555"/><path d="M1.2 6.4 H4.8" stroke="#555" stroke-width="0.8"/></svg>
<svg class="a" style="left:1084px;top:530px;" width="6" height="8" viewBox="0 0 6 8"><path d="M1.2 1 H4.8" stroke="#555" stroke-width="0.8"/><path d="M1.2 2.2 H4.8 L3 4.4Z M1.2 4.4 H4.8 L3 6.6Z" fill="#555"/></svg>
<div class="a" style="left:271px;top:90px;width:761px;height:7.3px;background:#fff"></div>
<svg class="a" style="left:271px;top:90px;" width="761" height="8" viewBox="0 0 761 8"><rect x="3.43" y="3.2" width="0.8" height="0.8" fill="#8a8a8a"/><rect x="9.05" y="1.8" width="0.8" height="3.6" fill="#6a6a6a"/><rect x="14.66" y="3.2" width="0.8" height="0.8" fill="#8a8a8a"/><rect x="25.90" y="3.2" width="0.8" height="0.8" fill="#8a8a8a"/><rect x="31.52" y="1.8" width="0.8" height="3.6" fill="#6a6a6a"/><rect x="37.13" y="3.2" width="0.8" height="0.8" fill="#8a8a8a"/><rect x="48.37" y="3.2" width="0.8" height="0.8" fill="#8a8a8a"/><rect x="53.99" y="1.8" width="0.8" height="3.6" fill="#6a6a6a"/><rect x="59.60" y="3.2" width="0.8" height="0.8" fill="#8a8a8a"/><rect x="70.84" y="3.2" width="0.8" height="0.8" fill="#8a8a8a"/><rect x="76.46" y="1.8" width="0.8" height="3.6" fill="#6a6a6a"/><rect x="82.07" y="3.2" width="0.8" height="0.8" fill="#8a8a8a"/><rect x="93.31" y="3.2" width="0.8" height="0.8" fill="#8a8a8a"/><rect x="98.93" y="1.8" width="0.8" height="3.6" fill="#6a6a6a"/><rect x="104.54" y="3.2" width="0.8" height="0.8" fill="#8a8a8a"/><rect x="115.78" y="3.2" width="0.8" height="0.8" fill="#8a8a8a"/><rect x="121.40" y="1.8" width="0.8" height="3.6" fill="#6a6a6a"/><rect x="127.01" y="3.2" width="0.8" height="0.8" fill="#8a8a8a"/><rect x="138.25" y="3.2" width="0.8" height="0.8" fill="#8a8a8a"/><rect x="143.87" y="1.8" width="0.8" height="3.6" fill="#6a6a6a"/><rect x="149.48" y="3.2" width="0.8" height="0.8" fill="#8a8a8a"/><rect x="160.72" y="3.2" width="0.8" height="0.8" fill="#8a8a8a"/><rect x="166.34" y="1.8" width="0.8" height="3.6" fill="#6a6a6a"/><rect x="171.95" y="3.2" width="0.8" height="0.8" fill="#8a8a8a"/><rect x="183.19" y="3.2" width="0.8" height="0.8" fill="#8a8a8a"/><rect x="188.81" y="1.8" width="0.8" height="3.6" fill="#6a6a6a"/><rect x="194.42" y="3.2" width="0.8" height="0.8" fill="#8a8a8a"/><rect x="205.66" y="3.2" width="0.8" height="0.8" fill="#8a8a8a"/><rect x="211.28" y="1.8" width="0.8" height="3.6" fill="#6a6a6a"/><rect x="216.89" y="3.2" width="0.8" height="0.8" fill="#8a8a8a"/><rect x="228.13" y="3.2" width="0.8" height="0.8" fill="#8a8a8a"/><rect x="233.75" y="1.8" width="0.8" height="3.6" fill="#6a6a6a"/><rect x="239.36" y="3.2" width="0.8" height="0.8" fill="#8a8a8a"/><rect x="250.60" y="3.2" width="0.8" height="0.8" fill="#8a8a8a"/><rect x="256.22" y="1.8" width="0.8" height="3.6" fill="#6a6a6a"/><rect x="261.83" y="3.2" width="0.8" height="0.8" fill="#8a8a8a"/><rect x="273.07" y="3.2" width="0.8" height="0.8" fill="#8a8a8a"/><rect x="278.69" y="1.8" width="0.8" height="3.6" fill="#6a6a6a"/><rect x="284.30" y="3.2" width="0.8" height="0.8" fill="#8a8a8a"/><rect x="295.54" y="3.2" width="0.8" height="0.8" fill="#8a8a8a"/><rect x="301.16" y="1.8" width="0.8" height="3.6" fill="#6a6a6a"/><rect x="306.77" y="3.2" width="0.8" height="0.8" fill="#8a8a8a"/><rect x="318.01" y="3.2" width="0.8" height="0.8" fill="#8a8a8a"/><rect x="323.63" y="1.8" width="0.8" height="3.6" fill="#6a6a6a"/><rect x="329.24" y="3.2" width="0.8" height="0.8" fill="#8a8a8a"/><rect x="340.48" y="3.2" width="0.8" height="0.8" fill="#8a8a8a"/><rect x="346.10" y="1.8" width="0.8" height="3.6" fill="#6a6a6a"/><rect x="351.71" y="3.2" width="0.8" height="0.8" fill="#8a8a8a"/><rect x="362.95" y="3.2" width="0.8" height="0.8" fill="#8a8a8a"/><rect x="368.57" y="1.8" width="0.8" height="3.6" fill="#6a6a6a"/><rect x="374.18" y="3.2" width="0.8" height="0.8" fill="#8a8a8a"/><rect x="385.42" y="3.2" width="0.8" height="0.8" fill="#8a8a8a"/><rect x="391.04" y="1.8" width="0.8" height="3.6" fill="#6a6a6a"/><rect x="396.65" y="3.2" width="0.8" height="0.8" fill="#8a8a8a"/><rect x="407.89" y="3.2" width="0.8" height="0.8" fill="#8a8a8a"/><rect x="413.51" y="1.8" width="0.8" height="3.6" fill="#6a6a6a"/><rect x="419.12" y="3.2" width="0.8" height="0.8" fill="#8a8a8a"/><rect x="430.36" y="3.2" width="0.8" height="0.8" fill="#8a8a8a"/><rect x="435.98" y="1.8" width="0.8" height="3.6" fill="#6a6a6a"/><rect x="441.59" y="3.2" width="0.8" height="0.8" fill="#8a8a8a"/><rect x="452.83" y="3.2" width="0.8" height="0.8" fill="#8a8a8a"/><rect x="458.45" y="1.8" width="0.8" height="3.6" fill="#6a6a6a"/><rect x="464.06" y="3.2" width="0.8" height="0.8" fill="#8a8a8a"/><rect x="475.30" y="3.2" width="0.8" height="0.8" fill="#8a8a8a"/><rect x="480.92" y="1.8" width="0.8" height="3.6" fill="#6a6a6a"/><rect x="486.53" y="3.2" width="0.8" height="0.8" fill="#8a8a8a"/><rect x="497.77" y="3.2" width="0.8" height="0.8" fill="#8a8a8a"/><rect x="503.39" y="1.8" width="0.8" height="3.6" fill="#6a6a6a"/><rect x="509.00" y="3.2" width="0.8" height="0.8" fill="#8a8a8a"/><rect x="520.24" y="3.2" width="0.8" height="0.8" fill="#8a8a8a"/><rect x="525.86" y="1.8" width="0.8" height="3.6" fill="#6a6a6a"/><rect x="531.47" y="3.2" width="0.8" height="0.8" fill="#8a8a8a"/><rect x="542.71" y="3.2" width="0.8" height="0.8" fill="#8a8a8a"/><rect x="548.33" y="1.8" width="0.8" height="3.6" fill="#6a6a6a"/><rect x="553.94" y="3.2" width="0.8" height="0.8" fill="#8a8a8a"/><rect x="565.18" y="3.2" width="0.8" height="0.8" fill="#8a8a8a"/><rect x="570.80" y="1.8" width="0.8" height="3.6" fill="#6a6a6a"/><rect x="576.41" y="3.2" width="0.8" height="0.8" fill="#8a8a8a"/><rect x="587.65" y="3.2" width="0.8" height="0.8" fill="#8a8a8a"/><rect x="593.27" y="1.8" width="0.8" height="3.6" fill="#6a6a6a"/><rect x="598.88" y="3.2" width="0.8" height="0.8" fill="#8a8a8a"/><rect x="610.12" y="3.2" width="0.8" height="0.8" fill="#8a8a8a"/><rect x="615.74" y="1.8" width="0.8" height="3.6" fill="#6a6a6a"/><rect x="621.35" y="3.2" width="0.8" height="0.8" fill="#8a8a8a"/><rect x="632.59" y="3.2" width="0.8" height="0.8" fill="#8a8a8a"/><rect x="638.21" y="1.8" width="0.8" height="3.6" fill="#6a6a6a"/><rect x="643.82" y="3.2" width="0.8" height="0.8" fill="#8a8a8a"/><rect x="655.06" y="3.2" width="0.8" height="0.8" fill="#8a8a8a"/><rect x="660.68" y="1.8" width="0.8" height="3.6" fill="#6a6a6a"/><rect x="666.29" y="3.2" width="0.8" height="0.8" fill="#8a8a8a"/><rect x="677.53" y="3.2" width="0.8" height="0.8" fill="#8a8a8a"/><rect x="683.15" y="1.8" width="0.8" height="3.6" fill="#6a6a6a"/><rect x="688.76" y="3.2" width="0.8" height="0.8" fill="#8a8a8a"/><rect x="700.00" y="3.2" width="0.8" height="0.8" fill="#8a8a8a"/><rect x="705.62" y="1.8" width="0.8" height="3.6" fill="#6a6a6a"/><rect x="711.23" y="3.2" width="0.8" height="0.8" fill="#8a8a8a"/><rect x="722.47" y="3.2" width="0.8" height="0.8" fill="#8a8a8a"/><rect x="728.09" y="1.8" width="0.8" height="3.6" fill="#6a6a6a"/><rect x="733.70" y="3.2" width="0.8" height="0.8" fill="#8a8a8a"/><rect x="744.94" y="3.2" width="0.8" height="0.8" fill="#8a8a8a"/><rect x="750.56" y="1.8" width="0.8" height="3.6" fill="#6a6a6a"/><rect x="756.17" y="3.2" width="0.8" height="0.8" fill="#8a8a8a"/></svg>
<div class="a" style="left:288.03px;top:89.09px;font-size:6.6px;line-height:9px;color:#555;transform:scaleX(0.9697);transform-origin:0 0;">16</div>
<div class="a" style="left:310.51px;top:89.09px;font-size:6.6px;line-height:9px;color:#555;transform:scaleX(0.9601);transform-origin:0 0;">15</div>
<div class="a" style="left:332.98px;top:89.09px;font-size:6.6px;line-height:9px;color:#555;transform:scaleX(0.9507);transform-origin:0 0;">14</div>
<div class="a" style="left:355.44px;top:89.09px;font-size:6.6px;line-height:9px;color:#555;transform:scaleX(0.9697);transform-origin:0 0;">13</div>
<div class="a" style="left:377.91px;top:89.09px;font-size:6.6px;line-height:9px;color:#555;transform:scaleX(0.9697);transform-origin:0 0;">12</div>
<div class="a" style="left:400.34px;top:89.09px;font-size:6.6px;line-height:9px;color:#555;transform:scaleX(1.0540);transform-origin:0 0;">11</div>
<div class="a" style="left:422.86px;top:89.09px;font-size:6.6px;line-height:9px;color:#555;transform:scaleX(0.9601);transform-origin:0 0;">10</div>
<div class="a" style="left:447.10px;top:89.09px;font-size:6.6px;line-height:9px;color:#555;transform:scaleX(1.0316);transform-origin:0 0;">9</div>
<div class="a" style="left:469.57px;top:89.09px;font-size:6.6px;line-height:9px;color:#555;transform:scaleX(1.0101);transform-origin:0 0;">8</div>
<div class="a" style="left:491.96px;top:89.09px;font-size:6.6px;line-height:9px;color:#555;transform:scaleX(1.0540);transform-origin:0 0;">7</div>
<div class="a" style="left:514.43px;top:89.09px;font-size:6.6px;line-height:9px;color:#555;transform:scaleX(1.0540);transform-origin:0 0;">6</div>
<div class="a" style="left:536.98px;top:89.09px;font-size:6.6px;line-height:9px;color:#555;transform:scaleX(1.0101);transform-origin:0 0;">5</div>
<div class="a" style="left:559.59px;top:89.09px;font-size:6.6px;line-height:9px;color:#555;transform:scaleX(0.9507);transform-origin:0 0;">4</div>
<div class="a" style="left:581.92px;top:89.09px;font-size:6.6px;line-height:9px;color:#555;transform:scaleX(1.0316);transform-origin:0 0;">3</div>
<div class="a" style="left:604.31px;top:89.09px;font-size:6.6px;line-height:9px;color:#555;transform:scaleX(1.0540);transform-origin:0 0;">2</div>
<div class="a" style="left:626.62px;top:89.09px;font-size:6.6px;line-height:9px;color:#555;transform:scaleX(1.1019);transform-origin:0 0;">1</div>
<div class="a" style="left:671.56px;top:89.09px;font-size:6.6px;line-height:9px;color:#555;transform:scaleX(1.1019);transform-origin:0 0;">1</div>
<div class="a" style="left:694.19px;top:89.09px;font-size:6.6px;line-height:9px;color:#555;transform:scaleX(1.0540);transform-origin:0 0;">2</div>
<div class="a" style="left:716.74px;top:89.09px;font-size:6.6px;line-height:9px;color:#555;transform:scaleX(1.0316);transform-origin:0 0;">3</div>
<div class="a" style="left:739.35px;top:89.09px;font-size:6.6px;line-height:9px;color:#555;transform:scaleX(0.9507);transform-origin:0 0;">4</div>
<div class="a" style="left:761.68px;top:89.09px;font-size:6.6px;line-height:9px;color:#555;transform:scaleX(1.0101);transform-origin:0 0;">5</div>
<div class="a" style="left:784.07px;top:89.09px;font-size:6.6px;line-height:9px;color:#555;transform:scaleX(1.0540);transform-origin:0 0;">6</div>
<div class="a" style="left:806.54px;top:89.09px;font-size:6.6px;line-height:9px;color:#555;transform:scaleX(1.0540);transform-origin:0 0;">7</div>
<div class="a" style="left:829.09px;top:89.09px;font-size:6.6px;line-height:9px;color:#555;transform:scaleX(1.0101);transform-origin:0 0;">8</div>
<div class="a" style="left:851.56px;top:89.09px;font-size:6.6px;line-height:9px;color:#555;transform:scaleX(1.0316);transform-origin:0 0;">9</div>
<div class="a" style="left:872.26px;top:89.09px;font-size:6.6px;line-height:9px;color:#555;transform:scaleX(0.9601);transform-origin:0 0;">10</div>
<div class="a" style="left:894.68px;top:89.09px;font-size:6.6px;line-height:9px;color:#555;transform:scaleX(1.0540);transform-origin:0 0;">11</div>
<div class="a" style="left:917.19px;top:89.09px;font-size:6.6px;line-height:9px;color:#555;transform:scaleX(0.9697);transform-origin:0 0;">12</div>
<div class="a" style="left:939.66px;top:89.09px;font-size:6.6px;line-height:9px;color:#555;transform:scaleX(0.9697);transform-origin:0 0;">13</div>
<div class="a" style="left:962.14px;top:89.09px;font-size:6.6px;line-height:9px;color:#555;transform:scaleX(0.9507);transform-origin:0 0;">14</div>
<div class="a" style="left:984.61px;top:89.09px;font-size:6.6px;line-height:9px;color:#555;transform:scaleX(0.9601);transform-origin:0 0;">15</div>
<div class="a" style="left:1007.07px;top:89.09px;font-size:6.6px;line-height:9px;color:#555;transform:scaleX(0.9697);transform-origin:0 0;">16</div>
<div class="a" style="left:649.33px;top:89.09px;font-size:6.6px;line-height:9px;color:#555;transform:scaleX(1.0101);transform-origin:0 0;">0</div>
<div class="a" style="left:206px;top:111.3px;width:7.5px;height:428.4px;background:#fff"></div>
<svg class="a" style="left:206px;top:111.3px;" width="8" height="429" viewBox="0 0 8 429"><rect x="2" y="0.44" width="3.6" height="0.8" fill="#6a6a6a"/><rect x="3.4" y="6.05" width="0.8" height="0.8" fill="#8a8a8a"/><rect x="3.4" y="17.29" width="0.8" height="0.8" fill="#8a8a8a"/><rect x="2" y="22.91" width="3.6" height="0.8" fill="#6a6a6a"/><rect x="3.4" y="28.52" width="0.8" height="0.8" fill="#8a8a8a"/><rect x="3.4" y="39.76" width="0.8" height="0.8" fill="#8a8a8a"/><rect x="2" y="45.38" width="3.6" height="0.8" fill="#6a6a6a"/><rect x="3.4" y="50.99" width="0.8" height="0.8" fill="#8a8a8a"/><rect x="3.4" y="62.23" width="0.8" height="0.8" fill="#8a8a8a"/><rect x="2" y="67.85" width="3.6" height="0.8" fill="#6a6a6a"/><rect x="3.4" y="73.46" width="0.8" height="0.8" fill="#8a8a8a"/><rect x="3.4" y="84.70" width="0.8" height="0.8" fill="#8a8a8a"/><rect x="2" y="90.32" width="3.6" height="0.8" fill="#6a6a6a"/><rect x="3.4" y="95.93" width="0.8" height="0.8" fill="#8a8a8a"/><rect x="3.4" y="107.17" width="0.8" height="0.8" fill="#8a8a8a"/><rect x="2" y="112.79" width="3.6" height="0.8" fill="#6a6a6a"/><rect x="3.4" y="118.40" width="0.8" height="0.8" fill="#8a8a8a"/><rect x="3.4" y="129.64" width="0.8" height="0.8" fill="#8a8a8a"/><rect x="2" y="135.26" width="3.6" height="0.8" fill="#6a6a6a"/><rect x="3.4" y="140.87" width="0.8" height="0.8" fill="#8a8a8a"/><rect x="3.4" y="152.11" width="0.8" height="0.8" fill="#8a8a8a"/><rect x="2" y="157.73" width="3.6" height="0.8" fill="#6a6a6a"/><rect x="3.4" y="163.34" width="0.8" height="0.8" fill="#8a8a8a"/><rect x="3.4" y="174.58" width="0.8" height="0.8" fill="#8a8a8a"/><rect x="2" y="180.20" width="3.6" height="0.8" fill="#6a6a6a"/><rect x="3.4" y="185.81" width="0.8" height="0.8" fill="#8a8a8a"/><rect x="3.4" y="197.05" width="0.8" height="0.8" fill="#8a8a8a"/><rect x="2" y="202.66" width="3.6" height="0.8" fill="#6a6a6a"/><rect x="3.4" y="208.28" width="0.8" height="0.8" fill="#8a8a8a"/><rect x="3.4" y="219.52" width="0.8" height="0.8" fill="#8a8a8a"/><rect x="2" y="225.14" width="3.6" height="0.8" fill="#6a6a6a"/><rect x="3.4" y="230.75" width="0.8" height="0.8" fill="#8a8a8a"/><rect x="3.4" y="241.99" width="0.8" height="0.8" fill="#8a8a8a"/><rect x="2" y="247.61" width="3.6" height="0.8" fill="#6a6a6a"/><rect x="3.4" y="253.22" width="0.8" height="0.8" fill="#8a8a8a"/><rect x="3.4" y="264.46" width="0.8" height="0.8" fill="#8a8a8a"/><rect x="2" y="270.08" width="3.6" height="0.8" fill="#6a6a6a"/><rect x="3.4" y="275.69" width="0.8" height="0.8" fill="#8a8a8a"/><rect x="3.4" y="286.93" width="0.8" height="0.8" fill="#8a8a8a"/><rect x="2" y="292.55" width="3.6" height="0.8" fill="#6a6a6a"/><rect x="3.4" y="298.16" width="0.8" height="0.8" fill="#8a8a8a"/><rect x="3.4" y="309.40" width="0.8" height="0.8" fill="#8a8a8a"/><rect x="2" y="315.02" width="3.6" height="0.8" fill="#6a6a6a"/><rect x="3.4" y="320.63" width="0.8" height="0.8" fill="#8a8a8a"/><rect x="3.4" y="331.87" width="0.8" height="0.8" fill="#8a8a8a"/><rect x="2" y="337.49" width="3.6" height="0.8" fill="#6a6a6a"/><rect x="3.4" y="343.10" width="0.8" height="0.8" fill="#8a8a8a"/><rect x="3.4" y="354.34" width="0.8" height="0.8" fill="#8a8a8a"/><rect x="2" y="359.96" width="3.6" height="0.8" fill="#6a6a6a"/><rect x="3.4" y="365.57" width="0.8" height="0.8" fill="#8a8a8a"/><rect x="3.4" y="376.81" width="0.8" height="0.8" fill="#8a8a8a"/><rect x="2" y="382.43" width="3.6" height="0.8" fill="#6a6a6a"/><rect x="3.4" y="388.04" width="0.8" height="0.8" fill="#8a8a8a"/><rect x="3.4" y="399.28" width="0.8" height="0.8" fill="#8a8a8a"/><rect x="2" y="404.90" width="3.6" height="0.8" fill="#6a6a6a"/><rect x="3.4" y="410.51" width="0.8" height="0.8" fill="#8a8a8a"/><rect x="3.4" y="421.75" width="0.8" height="0.8" fill="#8a8a8a"/></svg>
<div class="a" style="left:204.80px;top:119.37px;width:10px;height:8px;line-height:8px;text-align:center;font-size:6.6px;color:#555;transform:rotate(90deg)">9</div>
<div class="a" style="left:204.80px;top:141.84px;width:10px;height:8px;line-height:8px;text-align:center;font-size:6.6px;color:#555;transform:rotate(90deg)">8</div>
<div class="a" style="left:204.80px;top:164.31px;width:10px;height:8px;line-height:8px;text-align:center;font-size:6.6px;color:#555;transform:rotate(90deg)">7</div>
<div class="a" style="left:204.80px;top:186.78px;width:10px;height:8px;line-height:8px;text-align:center;font-size:6.6px;color:#555;transform:rotate(90deg)">6</div>
<div class="a" style="left:204.80px;top:209.25px;width:10px;height:8px;line-height:8px;text-align:center;font-size:6.6px;color:#555;transform:rotate(90deg)">5</div>
<div class="a" style="left:204.80px;top:231.72px;width:10px;height:8px;line-height:8px;text-align:center;font-size:6.6px;color:#555;transform:rotate(90deg)">4</div>
<div class="a" style="left:204.80px;top:254.19px;width:10px;height:8px;line-height:8px;text-align:center;font-size:6.6px;color:#555;transform:rotate(90deg)">3</div>
<div class="a" style="left:204.80px;top:276.66px;width:10px;height:8px;line-height:8px;text-align:center;font-size:6.6px;color:#555;transform:rotate(90deg)">2</div>
<div class="a" style="left:204.80px;top:299.13px;width:10px;height:8px;line-height:8px;text-align:center;font-size:6.6px;color:#555;transform:rotate(90deg)">1</div>
<div class="a" style="left:204.80px;top:321.60px;width:10px;height:8px;line-height:8px;text-align:center;font-size:6.6px;color:#555;transform:rotate(90deg)">0</div>
<div class="a" style="left:204.80px;top:344.07px;width:10px;height:8px;line-height:8px;text-align:center;font-size:6.6px;color:#555;transform:rotate(90deg)">1</div>
<div class="a" style="left:204.80px;top:366.54px;width:10px;height:8px;line-height:8px;text-align:center;font-size:6.6px;color:#555;transform:rotate(90deg)">2</div>
<div class="a" style="left:204.80px;top:389.01px;width:10px;height:8px;line-height:8px;text-align:center;font-size:6.6px;color:#555;transform:rotate(90deg)">3</div>
<div class="a" style="left:204.80px;top:411.48px;width:10px;height:8px;line-height:8px;text-align:center;font-size:6.6px;color:#555;transform:rotate(90deg)">4</div>
<div class="a" style="left:204.80px;top:433.95px;width:10px;height:8px;line-height:8px;text-align:center;font-size:6.6px;color:#555;transform:rotate(90deg)">5</div>
<div class="a" style="left:204.80px;top:456.42px;width:10px;height:8px;line-height:8px;text-align:center;font-size:6.6px;color:#555;transform:rotate(90deg)">6</div>
<div class="a" style="left:204.80px;top:478.89px;width:10px;height:8px;line-height:8px;text-align:center;font-size:6.6px;color:#555;transform:rotate(90deg)">7</div>
<div class="a" style="left:204.80px;top:501.36px;width:10px;height:8px;line-height:8px;text-align:center;font-size:6.6px;color:#555;transform:rotate(90deg)">8</div>
<div class="a" style="left:204.80px;top:523.83px;width:10px;height:8px;line-height:8px;text-align:center;font-size:6.6px;color:#555;transform:rotate(90deg)">9</div>
<div class="a" style="left:204px;top:550.2px;width:886px;height:1px;background:#cfcfcf"></div>
<div class="a" style="left:208.82px;top:553.79px;font-size:8.4px;line-height:11px;color:#5a5a5a;transform:scaleX(0.9748);transform-origin:0 0;-webkit-text-stroke:0.1px currentColor;">Jegyzet beírásához kattintson ide</div>
<div class="a" style="left:270px;top:111px;width:762px;height:429px;background:#fff"></div>
<div class="a" style="left:270px;top:418px;width:762px;height:122px;background:#315a1d"></div>
<div class="a" style="left:503.76px;top:129.95px;font-size:36.4px;line-height:47px;color:#262626;transform:scaleX(0.9759);transform-origin:0 0;">Projekt alapadatok</div>
<div class="a" style="left:430.71px;top:222.88px;font-size:14.25px;line-height:19px;color:#262626;font-weight:bold;">3 éves futamidő –</div>
<div class="a" style="left:550.29px;top:222.88px;font-size:14.25px;line-height:19px;color:#262626;"> 2022. 03. 01.  -  2025. 02. 28.</div>
<div class="a" style="left:430.57px;top:256.78px;font-size:14.25px;line-height:19px;color:#262626;font-weight:bold;">5 Projekt eredmény</div>
<div class="a" style="left:430.57px;top:290.98px;font-size:14.25px;line-height:19px;color:#262626;font-weight:bold;">5 Partnertalálkozó</div>
<div class="a" style="left:553.32px;top:290.98px;font-size:14.25px;line-height:19px;color:#262626;"> (HU, SR, RO, HU, HU) + 2 virtuális találkozó</div>
<div class="a" style="left:430.57px;top:325.18px;font-size:14.25px;line-height:19px;color:#262626;font-weight:bold;">8 Multiplikációs esemény</div>
<div class="a" style="left:430.57px;top:359.48px;font-size:14.25px;line-height:19px;color:#262626;font-weight:bold;">5 Partner</div>
<div class="a" style="left:492.35px;top:359.48px;font-size:14.25px;line-height:19px;color:#262626;"> (3 HU, 1 RO, 1 SR)</div>
<div class="a" style="left:328.44px;top:448.88px;font-size:12.0px;line-height:16px;color:#eef3e6;transform:scaleX(0.9350);transform-origin:0 0;-webkit-text-stroke:0.15px currentColor;">CÉLCSOPORT</div>
<div class="a" style="left:329.00px;top:462.28px;font-size:12.0px;line-height:16px;color:#eef3e6;transform:scaleX(0.9289);transform-origin:0 0;-webkit-text-stroke:0.15px currentColor;">Az agrárszakképzés szakoktatói</div>
<div class="a" style="left:752.73px;top:449.69px;font-size:9.9px;line-height:13px;color:#eef3e6;transform:scaleX(0.9743);transform-origin:0 0;-webkit-text-stroke:0.15px currentColor;">KEDVEZMÉNYEZETTEK</div>
<div class="a" style="left:754.9px;top:466.8px;width:3.4px;height:3.4px;border-radius:50%;background:#f4f7f0"></div>
<div class="a" style="left:754.9px;top:493.1px;width:3.4px;height:3.4px;border-radius:50%;background:#f4f7f0"></div>
<div class="a" style="left:770.61px;top:461.08px;font-size:11.3px;line-height:15px;color:#eef3e6;transform:scaleX(0.9879);transform-origin:0 0;-webkit-text-stroke:0.15px currentColor;">Kertészeti szakképzésben részt vevő</div>
<div class="a" style="left:771.05px;top:474.28px;font-size:11.3px;line-height:15px;color:#eef3e6;transform:scaleX(0.9915);transform-origin:0 0;-webkit-text-stroke:0.15px currentColor;">diákok, hallgatók (IVET/CVET)</div>
<div class="a" style="left:770.94px;top:487.38px;font-size:11.3px;line-height:15px;color:#eef3e6;transform:scaleX(0.9876);transform-origin:0 0;-webkit-text-stroke:0.15px currentColor;">Szakképző intézmények és kertészeti</div>
<div class="a" style="left:771.50px;top:500.88px;font-size:11.3px;line-height:15px;color:#eef3e6;transform:scaleX(0.9772);transform-origin:0 0;-webkit-text-stroke:0.15px currentColor;">vállalkozások</div>
<svg class="a" style="left:580px;top:418px;" width="140" height="110" viewBox="0 0 140 110"><path d="M71.31 6.89 L69.71 7.46 L67.46 8.17 L64.75 9.04 L61.80 10.06 L58.81 11.25 L56.02 12.60 L53.40 14.11 L50.76 15.80 L48.13 17.63 L45.56 19.57 L43.10 21.59 L40.82 23.64 L38.68 25.62 L36.59 27.58 L34.57 29.64 L32.70 31.92 L31.01 34.53 L29.56 37.58 L28.38 41.42 L27.44 46.03 L26.68 50.93 L26.09 55.63 L25.63 59.64 L25.27 62.45 L25.86 62.55 L26.39 59.74 L27.01 55.76 L27.77 51.10 L28.68 46.28 L29.77 41.80 L31.04 38.18 L32.53 35.43 L34.22 33.10 L36.09 31.08 L38.12 29.24 L40.28 27.45 L42.51 25.60 L44.84 23.73 L47.31 21.92 L49.88 20.18 L52.50 18.56 L55.10 17.09 L57.62 15.81 L60.23 14.73 L63.06 13.77 L65.93 12.95 L68.62 12.27 L70.93 11.71 L72.63 11.29Z M46.73 19.95 L44.74 21.43 L41.98 23.43 L38.70 25.80 L35.12 28.38 L31.49 31.03 L28.05 33.59 L24.49 36.29 L20.56 39.31 L16.58 42.38 L12.86 45.27 L9.73 47.72 L7.49 49.50 L7.67 49.74 L10.00 48.09 L13.23 45.75 L17.04 42.99 L21.11 40.04 L25.12 37.16 L28.77 34.59 L32.30 32.16 L36.01 29.64 L39.66 27.19 L43.03 24.95 L45.88 23.07 L47.96 21.72Z M64.17 10.55 L62.33 10.98 L59.76 11.51 L56.70 12.14 L53.40 12.90 L50.12 13.81 L47.10 14.89 L44.16 16.31 L41.07 18.06 L38.02 19.96 L35.22 21.79 L32.87 23.37 L31.17 24.49 L31.33 24.75 L33.12 23.77 L35.56 22.35 L38.45 20.67 L41.56 18.95 L44.69 17.38 L47.60 16.17 L50.55 15.29 L53.78 14.57 L57.05 14.00 L60.12 13.55 L62.72 13.20 L64.62 12.94Z M67.20 12.01 L66.14 13.80 L64.62 16.22 L62.79 19.13 L60.82 22.41 L58.87 25.92 L57.10 29.51 L55.45 33.27 L53.77 37.31 L52.12 41.57 L50.57 45.94 L49.17 50.31 L47.99 54.59 L47.03 58.98 L46.23 63.60 L45.60 68.21 L45.13 72.56 L44.81 76.40 L44.66 79.51 L44.75 81.82 L45.12 83.50 L45.68 84.65 L46.27 85.40 L46.76 85.87 L47.08 86.31 L47.61 86.03 L47.40 85.45 L47.03 84.85 L46.65 84.15 L46.35 83.17 L46.18 81.72 L46.25 79.58 L46.57 76.56 L47.04 72.78 L47.68 68.51 L48.46 63.99 L49.40 59.49 L50.50 55.26 L51.80 51.15 L53.32 46.93 L55.00 42.71 L56.78 38.58 L58.58 34.67 L60.33 31.09 L62.16 27.73 L64.18 24.45 L66.23 21.35 L68.17 18.58 L69.83 16.24 L71.06 14.51Z M69.43 14.17 L69.49 16.74 L69.54 20.28 L69.58 24.47 L69.59 29.00 L69.56 33.55 L69.49 37.79 L69.32 41.72 L69.06 45.60 L68.76 49.54 L68.48 53.60 L68.27 57.89 L68.21 62.48 L68.32 67.81 L68.56 73.88 L68.87 80.16 L69.22 86.09 L69.54 91.12 L69.78 94.71 L70.38 94.69 L70.34 91.09 L70.23 86.05 L70.09 80.11 L69.98 73.84 L69.95 67.79 L70.05 62.52 L70.32 58.00 L70.72 53.79 L71.21 49.78 L71.71 45.87 L72.18 41.96 L72.56 37.96 L72.84 33.66 L73.08 29.08 L73.27 24.54 L73.45 20.34 L73.60 16.80 L73.75 14.24Z M72.83 14.61 L73.45 17.14 L74.28 20.61 L75.24 24.74 L76.25 29.22 L77.24 33.78 L78.12 38.13 L78.91 42.30 L79.67 46.52 L80.41 50.83 L81.12 55.24 L81.80 59.79 L82.46 64.49 L83.12 69.77 L83.78 75.68 L84.41 81.73 L84.98 87.41 L85.48 92.22 L85.88 95.67 L86.47 95.62 L86.27 92.16 L85.96 87.33 L85.58 81.63 L85.14 75.56 L84.67 69.61 L84.20 64.30 L83.73 59.55 L83.23 54.96 L82.71 50.50 L82.16 46.14 L81.58 41.86 L80.97 37.63 L80.28 33.21 L79.47 28.58 L78.64 24.03 L77.87 19.86 L77.22 16.35 L76.79 13.79Z M76.03 13.73 L77.56 15.37 L79.67 17.58 L82.12 20.21 L84.71 23.13 L87.23 26.21 L89.48 29.33 L91.54 32.61 L93.58 36.21 L95.57 40.00 L97.51 43.90 L99.37 47.81 L101.14 51.62 L102.84 55.55 L104.49 59.75 L106.07 63.96 L107.54 67.93 L108.89 71.42 L110.10 74.17 L111.15 76.09 L112.07 77.32 L112.87 78.05 L113.53 78.42 L114.01 78.60 L114.39 78.83 L114.78 78.37 L114.44 77.98 L114.02 77.65 L113.58 77.25 L113.03 76.58 L112.34 75.41 L111.49 73.55 L110.47 70.82 L109.28 67.31 L107.95 63.29 L106.51 59.01 L104.99 54.71 L103.40 50.65 L101.76 46.74 L100.02 42.73 L98.20 38.72 L96.31 34.78 L94.35 31.01 L92.33 27.49 L90.08 24.10 L87.57 20.78 L85.02 17.67 L82.65 14.90 L80.67 12.60 L79.28 10.89Z M78.83 12.59 L81.41 13.65 L85.02 15.11 L89.23 16.86 L93.67 18.81 L97.93 20.83 L101.62 22.84 L104.86 24.90 L108.00 27.11 L110.99 29.43 L113.80 31.79 L116.40 34.16 L118.77 36.48 L120.93 38.91 L122.92 41.56 L124.71 44.23 L126.27 46.71 L127.58 48.80 L128.60 50.31 L128.98 50.07 L128.11 48.49 L126.95 46.31 L125.53 43.72 L123.86 40.93 L121.96 38.12 L119.86 35.49 L117.56 33.00 L115.02 30.46 L112.26 27.91 L109.31 25.41 L106.20 23.00 L102.92 20.72 L99.17 18.48 L94.89 16.25 L90.46 14.13 L86.28 12.20 L82.75 10.59 L80.26 9.38Z M79.18 10.87 L82.16 11.85 L86.33 13.21 L91.21 14.84 L96.39 16.65 L101.39 18.55 L105.79 20.44 L109.84 22.53 L113.95 24.95 L117.92 27.46 L121.53 29.84 L124.56 31.85 L126.81 33.27 L126.98 33.02 L124.82 31.48 L121.88 29.34 L118.35 26.82 L114.44 24.17 L110.37 21.60 L106.33 19.33 L101.93 17.27 L96.94 15.21 L91.79 13.24 L86.93 11.46 L82.83 9.96 L79.91 8.83Z M35.08 29.72 L34.24 31.17 L32.97 33.15 L31.48 35.53 L29.98 38.13 L28.69 40.81 L27.81 43.40 L27.44 46.10 L27.39 49.03 L27.55 51.98 L27.82 54.74 L28.09 57.06 L28.26 58.72 L28.56 58.70 L28.55 57.03 L28.43 54.69 L28.32 51.95 L28.31 49.03 L28.51 46.21 L29.00 43.72 L29.95 41.37 L31.32 38.89 L32.91 36.44 L34.51 34.19 L35.91 32.28 L36.89 30.89Z M42.68 37.53 L41.98 39.45 L40.95 42.13 L39.73 45.29 L38.47 48.65 L37.32 51.90 L36.41 54.76 L35.74 57.39 L35.19 60.03 L34.75 62.55 L34.41 64.84 L34.14 66.74 L33.94 68.15 L34.24 68.21 L34.57 66.82 L34.97 64.93 L35.44 62.68 L36.00 60.20 L36.67 57.63 L37.45 55.09 L38.47 52.31 L39.74 49.14 L41.12 45.85 L42.45 42.75 L43.61 40.11 L44.44 38.23Z M53.05 41.27 L52.17 43.52 L50.90 46.58 L49.40 50.23 L47.80 54.23 L46.25 58.34 L44.90 62.32 L43.67 66.53 L42.44 71.22 L41.25 76.02 L40.19 80.53 L39.31 84.34 L38.68 87.08 L38.97 87.16 L39.74 84.45 L40.76 80.67 L41.96 76.20 L43.28 71.45 L44.65 66.81 L46.01 62.68 L47.48 58.80 L49.14 54.78 L50.86 50.86 L52.49 47.27 L53.89 44.26 L54.91 42.06Z M51.05 65.48 L49.58 65.69 L47.50 65.91 L45.03 66.18 L42.42 66.55 L39.90 67.05 L37.71 67.73 L35.77 68.72 L33.88 69.98 L32.12 71.37 L30.56 72.72 L29.27 73.88 L28.32 74.69 L28.50 74.93 L29.53 74.19 L30.89 73.12 L32.51 71.86 L34.30 70.59 L36.18 69.46 L38.05 68.63 L40.14 68.09 L42.59 67.71 L45.17 67.46 L47.62 67.30 L49.72 67.19 L51.22 67.09Z M47.74 67.59 L46.93 68.43 L45.76 69.56 L44.36 70.91 L42.90 72.40 L41.50 73.94 L40.33 75.48 L39.34 77.12 L38.43 78.96 L37.59 80.83 L36.87 82.60 L36.28 84.09 L35.85 85.16 L36.12 85.29 L36.65 84.26 L37.35 82.81 L38.16 81.10 L39.09 79.29 L40.08 77.55 L41.11 76.04 L42.31 74.65 L43.73 73.23 L45.25 71.85 L46.70 70.59 L47.95 69.54 L48.85 68.77Z M59.80 34.06 L59.77 36.19 L59.73 39.19 L59.67 42.71 L59.56 46.41 L59.40 49.94 L59.18 52.97 L58.84 55.65 L58.39 58.28 L57.87 60.77 L57.37 63.00 L56.95 64.86 L56.67 66.25 L56.96 66.32 L57.35 64.96 L57.88 63.12 L58.49 60.92 L59.11 58.44 L59.68 55.79 L60.14 53.09 L60.47 50.02 L60.74 46.47 L60.95 42.76 L61.13 39.23 L61.28 36.24 L61.42 34.12Z M65.57 32.01 L65.19 33.64 L64.61 35.88 L63.94 38.55 L63.23 41.47 L62.58 44.43 L62.06 47.27 L61.66 50.22 L61.31 53.48 L61.02 56.79 L60.78 59.88 L60.59 62.50 L60.46 64.38 L60.76 64.41 L60.99 62.54 L61.27 59.93 L61.61 56.85 L62.00 53.56 L62.45 50.33 L62.94 47.43 L63.55 44.64 L64.29 41.73 L65.09 38.86 L65.86 36.23 L66.52 34.01 L67.01 32.39Z M69.93 61.70 L69.09 61.92 L67.89 62.16 L66.46 62.46 L64.95 62.84 L63.50 63.34 L62.25 63.99 L61.20 64.88 L60.25 65.98 L59.41 67.17 L58.67 68.32 L58.08 69.30 L57.64 69.99 L57.89 70.16 L58.42 69.53 L59.10 68.61 L59.91 67.54 L60.82 66.46 L61.78 65.50 L62.75 64.80 L63.88 64.34 L65.24 63.98 L66.71 63.73 L68.12 63.54 L69.34 63.41 L70.23 63.30Z M69.01 64.12 L68.55 65.39 L67.88 67.17 L67.09 69.26 L66.26 71.49 L65.51 73.68 L64.91 75.63 L64.48 77.46 L64.12 79.34 L63.83 81.15 L63.60 82.80 L63.43 84.19 L63.30 85.20 L63.59 85.25 L63.82 84.25 L64.09 82.88 L64.42 81.25 L64.80 79.47 L65.25 77.65 L65.77 75.89 L66.44 74.01 L67.28 71.88 L68.19 69.70 L69.07 67.65 L69.84 65.91 L70.39 64.67Z M69.83 72.37 L70.39 73.15 L71.18 74.22 L72.07 75.48 L72.98 76.87 L73.78 78.29 L74.38 79.68 L74.79 81.19 L75.07 82.95 L75.26 84.77 L75.39 86.50 L75.49 87.97 L75.61 89.02 L75.91 89.01 L75.89 87.95 L75.89 86.48 L75.85 84.74 L75.76 82.88 L75.57 81.05 L75.24 79.41 L74.68 77.88 L73.92 76.33 L73.07 74.85 L72.24 73.51 L71.55 72.39 L71.08 71.57Z M75.02 34.00 L74.85 35.67 L74.59 38.00 L74.28 40.76 L73.95 43.70 L73.65 46.59 L73.42 49.20 L73.24 51.68 L73.10 54.27 L72.97 56.80 L72.88 59.12 L72.81 61.07 L72.77 62.49 L73.07 62.51 L73.21 61.09 L73.38 59.15 L73.57 56.84 L73.79 54.32 L74.04 51.75 L74.31 49.29 L74.64 46.71 L75.04 43.84 L75.46 40.91 L75.87 38.17 L76.23 35.85 L76.49 34.19Z M80.69 49.55 L81.29 50.84 L82.10 52.48 L83.03 54.46 L84.00 56.80 L84.92 59.51 L85.70 62.59 L86.37 66.52 L87.00 71.38 L87.58 76.62 L88.09 81.67 L88.52 86.00 L88.87 89.03 L89.16 89.00 L88.93 85.96 L88.61 81.63 L88.20 76.56 L87.73 71.30 L87.21 66.40 L86.65 62.41 L85.96 59.23 L85.12 56.41 L84.23 53.97 L83.38 51.90 L82.67 50.23 L82.19 48.93Z M83.53 62.95 L84.30 64.12 L85.35 65.70 L86.58 67.59 L87.90 69.69 L89.22 71.89 L90.45 74.09 L91.68 76.53 L93.00 79.35 L94.33 82.28 L95.57 85.05 L96.62 87.40 L97.40 89.07 L97.68 88.96 L97.01 87.24 L96.07 84.84 L94.94 82.02 L93.72 79.04 L92.50 76.16 L91.37 73.63 L90.23 71.34 L89.00 69.06 L87.78 66.88 L86.64 64.91 L85.70 63.27 L85.03 62.05Z M85.52 66.12 L85.19 67.56 L84.66 69.57 L84.05 71.95 L83.48 74.53 L83.06 77.12 L82.92 79.55 L83.15 81.96 L83.65 84.52 L84.30 87.07 L85.00 89.43 L85.61 91.41 L86.03 92.84 L86.32 92.77 L85.99 91.31 L85.46 89.30 L84.85 86.93 L84.28 84.39 L83.88 81.86 L83.75 79.55 L83.96 77.24 L84.45 74.74 L85.10 72.22 L85.79 69.88 L86.41 67.90 L86.83 66.46Z M88.17 30.08 L87.85 31.53 L87.34 33.54 L86.74 35.93 L86.18 38.52 L85.78 41.12 L85.66 43.56 L85.90 45.98 L86.42 48.55 L87.10 51.10 L87.81 53.45 L88.44 55.43 L88.87 56.86 L89.16 56.78 L88.84 55.32 L88.33 53.31 L87.74 50.94 L87.19 48.39 L86.80 45.87 L86.69 43.56 L86.92 41.27 L87.43 38.78 L88.09 36.28 L88.80 33.94 L89.43 31.96 L89.86 30.52Z M89.90 20.92 L90.13 22.74 L90.39 25.25 L90.71 28.24 L91.10 31.51 L91.60 34.83 L92.23 38.00 L93.10 41.28 L94.21 44.88 L95.41 48.52 L96.59 51.93 L97.61 54.80 L98.34 56.86 L98.63 56.77 L98.03 54.67 L97.15 51.75 L96.11 48.30 L95.05 44.63 L94.09 41.01 L93.37 37.76 L92.89 34.63 L92.54 31.34 L92.29 28.10 L92.13 25.11 L92.01 22.59 L91.92 20.74Z M97.81 45.90 L98.61 47.01 L99.70 48.45 L100.96 50.19 L102.29 52.20 L103.56 54.47 L104.66 56.98 L105.66 60.09 L106.65 63.92 L107.59 68.01 L108.44 71.95 L109.15 75.32 L109.70 77.68 L110.00 77.62 L109.56 75.23 L108.95 71.85 L108.20 67.88 L107.37 63.75 L106.48 59.87 L105.57 56.66 L104.53 54.02 L103.31 51.61 L102.04 49.48 L100.85 47.65 L99.85 46.15 L99.16 45.01Z M105.75 61.28 L106.62 61.63 L107.83 62.11 L109.24 62.68 L110.73 63.34 L112.15 64.04 L113.38 64.76 L114.50 65.60 L115.64 66.60 L116.73 67.68 L117.73 68.70 L118.57 69.57 L119.21 70.18 L119.43 69.97 L118.87 69.30 L118.10 68.37 L117.17 67.27 L116.13 66.11 L115.02 65.00 L113.90 64.03 L112.64 63.18 L111.22 62.36 L109.74 61.61 L108.36 60.93 L107.19 60.36 L106.37 59.93Z M94.04 25.20 L95.36 26.63 L97.22 28.63 L99.38 31.00 L101.65 33.52 L103.81 35.99 L105.65 38.19 L107.26 40.28 L108.82 42.45 L110.28 44.57 L111.58 46.51 L112.68 48.14 L113.51 49.32 L113.76 49.16 L113.03 47.92 L112.04 46.22 L110.84 44.21 L109.47 42.01 L108.00 39.75 L106.47 37.57 L104.70 35.26 L102.62 32.70 L100.43 30.08 L98.35 27.63 L96.59 25.55 L95.36 24.04Z M111.33 38.58 L112.39 39.14 L113.84 39.92 L115.56 40.86 L117.40 41.89 L119.24 42.95 L120.95 43.96 L122.66 45.04 L124.51 46.25 L126.36 47.49 L128.08 48.65 L129.53 49.62 L130.59 50.31 L130.77 50.07 L129.77 49.29 L128.38 48.22 L126.72 46.97 L124.93 45.64 L123.14 44.34 L121.47 43.16 L119.81 42.04 L118.01 40.88 L116.21 39.75 L114.55 38.71 L113.15 37.83 L112.15 37.18Z M116.79 43.95 L117.50 45.00 L118.49 46.50 L119.64 48.25 L120.81 50.08 L121.88 51.81 L122.71 53.23 L123.30 54.41 L123.76 55.53 L124.12 56.54 L124.41 57.44 L124.64 58.19 L124.86 58.75 L125.14 58.67 L125.03 58.09 L124.89 57.32 L124.69 56.38 L124.42 55.30 L124.03 54.11 L123.51 52.83 L122.74 51.32 L121.75 49.52 L120.65 47.63 L119.58 45.82 L118.67 44.27 L118.06 43.17Z M105.76 25.22 L107.06 25.83 L108.88 26.69 L111.03 27.71 L113.27 28.79 L115.41 29.81 L117.24 30.67 L118.83 31.42 L120.37 32.14 L121.80 32.80 L123.07 33.39 L124.13 33.87 L124.93 34.23 L125.07 33.96 L124.31 33.53 L123.28 32.97 L122.05 32.30 L120.66 31.56 L119.16 30.76 L117.61 29.93 L115.82 28.99 L113.72 27.89 L111.51 26.74 L109.41 25.64 L107.62 24.70 L106.36 24.02Z M33.68 41.05 L32.43 41.93 L30.65 43.16 L28.55 44.60 L26.35 46.12 L24.26 47.59 L22.47 48.88 L20.92 50.04 L19.43 51.21 L18.05 52.32 L16.82 53.32 L15.81 54.17 L15.06 54.81 L15.24 55.04 L16.05 54.49 L17.13 53.72 L18.41 52.79 L19.85 51.77 L21.39 50.69 L22.98 49.61 L24.81 48.41 L26.96 47.03 L29.21 45.60 L31.36 44.24 L33.19 43.09 L34.50 42.29Z " fill="#f4f5ef" style="filter:blur(0.3px)"/></svg>
<svg class="a" style="left:580px;top:418px;" width="140" height="110" viewBox="0 0 140 110"><ellipse cx="72" cy="10.5" rx="6" ry="2.6" fill="#f4f5ef" style="filter:blur(0.6px)"/><ellipse cx="71" cy="13" rx="3" ry="3" fill="#f4f5ef" style="filter:blur(0.6px)"/></svg>
<svg class="a" style="left:505.5px;top:433.5px;" width="9" height="12" viewBox="0 0 9 12"><path d="M1 0.8 V9.6 L3.2 7.6 L4.8 11 L6.4 10.3 L4.8 7 L7.8 7Z" fill="#f5f5f5" stroke="#111" stroke-width="0.9"/></svg>
<div class="a" style="left:13.47px;top:95.49px;font-size:7.8px;line-height:10px;color:#555;transform:scaleX(0.9615);transform-origin:0 0;">1</div>
<div class="a" style="left:12.94px;top:193.59px;font-size:7.8px;line-height:10px;color:#d24726;transform:scaleX(1.1706);transform-origin:0 0;">2</div>
<svg class="a" style="left:12.6px;top:204.70000000000002px;" width="6" height="6" viewBox="0 0 6 6"><path d="M3 0.2 L3.7 2.2 L5.8 2.2 L4.1 3.5 L4.7 5.6 L3 4.3 L1.3 5.6 L1.9 3.5 L0.2 2.2 L2.3 2.2Z" fill="#666"/></svg>
<div class="a" style="left:13.72px;top:290.99px;font-size:7.8px;line-height:10px;color:#555;transform:scaleX(0.9002);transform-origin:0 0;">3</div>
<svg class="a" style="left:12.6px;top:302.4px;" width="6" height="6" viewBox="0 0 6 6"><path d="M3 0.2 L3.7 2.2 L5.8 2.2 L4.1 3.5 L4.7 5.6 L3 4.3 L1.3 5.6 L1.9 3.5 L0.2 2.2 L2.3 2.2Z" fill="#666"/></svg>
<div class="a" style="left:13.87px;top:390.49px;font-size:7.8px;line-height:10px;color:#555;transform:scaleX(0.8296);transform-origin:0 0;">4</div>
<svg class="a" style="left:12.6px;top:401.4px;" width="6" height="6" viewBox="0 0 6 6"><path d="M3 0.2 L3.7 2.2 L5.8 2.2 L4.1 3.5 L4.7 5.6 L3 4.3 L1.3 5.6 L1.9 3.5 L0.2 2.2 L2.3 2.2Z" fill="#666"/></svg>
<div class="a" style="left:13.72px;top:488.49px;font-size:7.8px;line-height:10px;color:#555;transform:scaleX(0.8814);transform-origin:0 0;">5</div>
<svg class="a" style="left:12.6px;top:499.4px;" width="6" height="6" viewBox="0 0 6 6"><path d="M3 0.2 L3.7 2.2 L5.8 2.2 L4.1 3.5 L4.7 5.6 L3 4.3 L1.3 5.6 L1.9 3.5 L0.2 2.2 L2.3 2.2Z" fill="#666"/></svg>
<div class="a" style="left:27px;top:98.3px;width:152px;height:85.5px;overflow:hidden;background:#6aa33e"><svg class="a" style="left:0;top:0" width="152" height="41" viewBox="0 0 152 41"><defs><filter id="bl1" x="-10%" y="-10%" width="120%" height="120%"><feGaussianBlur stdDeviation="0.45"/></filter><filter id="bl2" x="-50%" y="-50%" width="200%" height="200%"><feGaussianBlur stdDeviation="2.2"/></filter></defs><rect width="152" height="41" fill="#3e9a34"/><rect width="152" height="14" fill="#d2d8cf"/><g filter="url(#bl1)"><circle cx="94.7" cy="33.8" r="2.2" fill="#1f7a22"/><circle cx="127.7" cy="34.7" r="1.2" fill="#1f7a22"/><circle cx="136.9" cy="16.2" r="1.6" fill="#8fd870"/><circle cx="57.9" cy="15.9" r="1.2" fill="#8fd870"/><circle cx="62.0" cy="18.1" r="2.4" fill="#46b03a"/><circle cx="24.3" cy="35.3" r="1.0" fill="#2c8a28"/><circle cx="19.3" cy="13.0" r="2.4" fill="#8fd870"/><circle cx="117.6" cy="39.9" r="1.1" fill="#5cc048"/><circle cx="44.0" cy="39.9" r="1.8" fill="#8fd870"/><circle cx="27.6" cy="40.1" r="1.2" fill="#46b03a"/><circle cx="45.4" cy="23.1" r="1.1" fill="#5cc048"/><circle cx="40.1" cy="22.3" r="2.3" fill="#1f7a22"/><circle cx="90.6" cy="32.8" r="0.9" fill="#c6eab0"/><circle cx="124.4" cy="26.5" r="1.4" fill="#2c8a28"/><circle cx="71.8" cy="17.9" r="1.3" fill="#1f7a22"/><circle cx="144.3" cy="23.0" r="1.5" fill="#46b03a"/><circle cx="55.7" cy="29.2" r="0.8" fill="#1f7a22"/><circle cx="107.6" cy="30.5" r="2.5" fill="#37a032"/><circle cx="114.9" cy="39.0" r="2.5" fill="#c6eab0"/><circle cx="77.9" cy="38.0" r="1.3" fill="#2c8a28"/><circle cx="16.4" cy="34.0" r="2.2" fill="#2a6a20"/><circle cx="5.6" cy="39.5" r="1.0" fill="#c6eab0"/><circle cx="78.0" cy="23.2" r="1.1" fill="#2a6a20"/><circle cx="140.5" cy="28.3" r="1.4" fill="#c6eab0"/><circle cx="46.5" cy="35.4" r="1.9" fill="#2a6a20"/><circle cx="151.5" cy="17.5" r="0.9" fill="#46b03a"/><circle cx="4.8" cy="33.7" r="1.4" fill="#2a6a20"/><circle cx="69.3" cy="24.8" r="0.9" fill="#1f7a22"/><circle cx="121.9" cy="22.4" r="1.2" fill="#5cc048"/><circle cx="95.8" cy="35.1" r="1.0" fill="#46b03a"/><circle cx="56.7" cy="14.6" r="1.6" fill="#5cc048"/><circle cx="68.9" cy="41.0" r="2.3" fill="#2c8a28"/><circle cx="145.9" cy="32.3" r="1.4" fill="#2a6a20"/><circle cx="44.2" cy="24.3" r="1.1" fill="#46b03a"/><circle cx="125.0" cy="27.9" r="1.1" fill="#2c8a28"/><circle cx="131.9" cy="18.0" r="1.7" fill="#c6eab0"/><circle cx="9.6" cy="35.3" r="1.4" fill="#1f7a22"/><circle cx="115.5" cy="23.2" r="2.1" fill="#2a6a20"/><circle cx="127.0" cy="20.4" r="2.6" fill="#2a6a20"/><circle cx="145.4" cy="22.5" r="1.1" fill="#1f7a22"/><circle cx="72.1" cy="34.7" r="1.4" fill="#2a6a20"/><circle cx="70.4" cy="35.9" r="2.0" fill="#c6eab0"/><circle cx="52.9" cy="31.0" r="2.1" fill="#46b03a"/><circle cx="53.2" cy="36.6" r="2.4" fill="#2c8a28"/><circle cx="148.4" cy="39.8" r="1.7" fill="#5cc048"/><circle cx="30.2" cy="23.1" r="2.3" fill="#2a6a20"/><circle cx="105.1" cy="33.2" r="2.1" fill="#5cc048"/><circle cx="93.8" cy="39.2" r="1.7" fill="#46b03a"/><circle cx="46.0" cy="28.5" r="2.4" fill="#2a6a20"/><circle cx="109.5" cy="13.8" r="1.1" fill="#2c8a28"/><circle cx="94.9" cy="18.1" r="2.2" fill="#5cc048"/><circle cx="95.9" cy="14.2" r="1.6" fill="#8fd870"/><circle cx="25.2" cy="38.0" r="1.0" fill="#5cc048"/><circle cx="73.4" cy="28.4" r="1.5" fill="#c6eab0"/><circle cx="57.8" cy="30.1" r="1.9" fill="#8fd870"/><circle cx="109.1" cy="23.5" r="1.4" fill="#2a6a20"/><circle cx="130.1" cy="37.3" r="2.0" fill="#c6eab0"/><circle cx="146.6" cy="28.4" r="1.3" fill="#2a6a20"/><circle cx="82.9" cy="22.5" r="1.8" fill="#c6eab0"/><circle cx="124.4" cy="24.7" r="2.3" fill="#c6eab0"/><circle cx="71.1" cy="17.4" r="1.5" fill="#2c8a28"/><circle cx="145.5" cy="40.1" r="1.9" fill="#c6eab0"/><circle cx="124.8" cy="31.5" r="1.5" fill="#c6eab0"/><circle cx="86.0" cy="30.2" r="1.1" fill="#46b03a"/><circle cx="65.2" cy="40.3" r="1.7" fill="#2c8a28"/><circle cx="147.8" cy="23.6" r="2.5" fill="#5cc048"/><circle cx="90.6" cy="20.3" r="2.6" fill="#2c8a28"/><circle cx="38.2" cy="13.6" r="2.5" fill="#2a6a20"/><circle cx="74.7" cy="21.0" r="1.7" fill="#37a032"/><circle cx="100.3" cy="39.9" r="1.2" fill="#1f7a22"/><circle cx="118.8" cy="36.2" r="0.8" fill="#2a6a20"/><circle cx="37.0" cy="26.3" r="0.9" fill="#2c8a28"/><circle cx="40.7" cy="17.3" r="2.6" fill="#2a6a20"/><circle cx="74.8" cy="40.8" r="1.7" fill="#37a032"/><circle cx="2.5" cy="16.5" r="1.3" fill="#c6eab0"/><circle cx="93.3" cy="33.5" r="0.8" fill="#c6eab0"/><circle cx="54.9" cy="33.9" r="1.9" fill="#1f7a22"/><circle cx="0.4" cy="28.5" r="2.0" fill="#37a032"/><circle cx="135.0" cy="28.3" r="0.8" fill="#46b03a"/><circle cx="90.4" cy="32.3" r="2.5" fill="#2c8a28"/><circle cx="130.5" cy="36.6" r="1.7" fill="#8fd870"/><circle cx="136.6" cy="26.0" r="2.2" fill="#2a6a20"/><circle cx="127.1" cy="32.4" r="1.6" fill="#2a6a20"/><circle cx="98.6" cy="26.2" r="1.4" fill="#5cc048"/><circle cx="72.7" cy="28.4" r="1.7" fill="#c6eab0"/><circle cx="81.8" cy="24.9" r="1.8" fill="#1f7a22"/><circle cx="10.4" cy="19.4" r="2.3" fill="#37a032"/><circle cx="100.9" cy="13.7" r="2.1" fill="#37a032"/><circle cx="151.7" cy="32.6" r="0.9" fill="#37a032"/><circle cx="33.3" cy="31.1" r="2.5" fill="#5cc048"/><circle cx="151.1" cy="32.8" r="1.6" fill="#5cc048"/><circle cx="92.8" cy="24.6" r="1.1" fill="#8fd870"/><circle cx="6.6" cy="16.0" r="1.5" fill="#37a032"/><circle cx="42.5" cy="29.0" r="1.0" fill="#46b03a"/><circle cx="133.5" cy="16.8" r="1.6" fill="#c6eab0"/><circle cx="104.2" cy="26.7" r="1.4" fill="#c6eab0"/><circle cx="139.0" cy="16.9" r="1.3" fill="#2a6a20"/><circle cx="138.4" cy="28.5" r="1.9" fill="#2a6a20"/><circle cx="9.6" cy="19.6" r="2.3" fill="#2a6a20"/><circle cx="78.6" cy="16.7" r="1.2" fill="#c6eab0"/><circle cx="68.9" cy="23.9" r="1.0" fill="#1f7a22"/><circle cx="99.6" cy="15.4" r="2.0" fill="#37a032"/><circle cx="131.2" cy="27.2" r="1.6" fill="#46b03a"/><circle cx="133.3" cy="26.5" r="1.4" fill="#1f7a22"/><circle cx="82.4" cy="23.8" r="2.3" fill="#46b03a"/><circle cx="103.5" cy="19.2" r="1.0" fill="#2c8a28"/><circle cx="124.7" cy="16.9" r="1.9" fill="#c6eab0"/><circle cx="127.0" cy="21.1" r="2.5" fill="#c6eab0"/><circle cx="121.0" cy="23.6" r="2.1" fill="#c6eab0"/><circle cx="98.5" cy="35.5" r="1.6" fill="#c6eab0"/><circle cx="78.7" cy="29.6" r="1.8" fill="#5cc048"/><circle cx="60.1" cy="15.7" r="0.9" fill="#8fd870"/><circle cx="29.7" cy="26.7" r="2.5" fill="#c6eab0"/><circle cx="0.1" cy="26.2" r="2.4" fill="#46b03a"/><circle cx="49.1" cy="25.9" r="1.1" fill="#5cc048"/><circle cx="10.8" cy="37.3" r="2.4" fill="#2c8a28"/><circle cx="23.1" cy="20.1" r="1.3" fill="#5cc048"/><circle cx="114.1" cy="31.8" r="0.9" fill="#1f7a22"/><circle cx="52.3" cy="34.1" r="1.4" fill="#1f7a22"/><circle cx="104.5" cy="31.9" r="1.6" fill="#5cc048"/><circle cx="17.9" cy="31.7" r="1.3" fill="#8fd870"/><circle cx="110.9" cy="17.6" r="1.2" fill="#1f7a22"/><circle cx="87.4" cy="31.4" r="1.9" fill="#c6eab0"/><circle cx="103.4" cy="18.2" r="1.5" fill="#37a032"/><circle cx="111.3" cy="33.1" r="1.1" fill="#8fd870"/><circle cx="26.7" cy="18.8" r="0.9" fill="#46b03a"/><circle cx="110.4" cy="20.6" r="1.6" fill="#2c8a28"/><circle cx="118.4" cy="24.5" r="0.9" fill="#c6eab0"/><circle cx="142.8" cy="33.1" r="1.2" fill="#2c8a28"/><circle cx="14.0" cy="26.2" r="2.0" fill="#1f7a22"/><circle cx="75.6" cy="34.9" r="0.9" fill="#46b03a"/><circle cx="67.8" cy="30.9" r="2.4" fill="#8fd870"/><circle cx="27.3" cy="27.2" r="1.5" fill="#8fd870"/><circle cx="12.8" cy="21.8" r="1.0" fill="#5cc048"/><circle cx="90.9" cy="37.0" r="1.2" fill="#1f7a22"/><circle cx="67.1" cy="23.0" r="1.6" fill="#46b03a"/><circle cx="79.4" cy="16.7" r="0.8" fill="#2a6a20"/><circle cx="104.7" cy="38.0" r="2.6" fill="#37a032"/><circle cx="21.1" cy="26.5" r="2.2" fill="#2a6a20"/><circle cx="124.6" cy="21.8" r="1.0" fill="#37a032"/><circle cx="71.7" cy="32.5" r="2.2" fill="#8fd870"/><circle cx="41.9" cy="26.8" r="1.2" fill="#8fd870"/><circle cx="121.0" cy="37.7" r="2.4" fill="#37a032"/><circle cx="63.9" cy="21.8" r="2.2" fill="#1f7a22"/><circle cx="136.2" cy="31.3" r="2.2" fill="#1f7a22"/><circle cx="67.2" cy="35.9" r="2.0" fill="#1f7a22"/><circle cx="110.7" cy="32.6" r="1.3" fill="#46b03a"/><circle cx="85.4" cy="22.0" r="1.4" fill="#5cc048"/><circle cx="39.9" cy="31.9" r="1.3" fill="#37a032"/><circle cx="82.4" cy="33.7" r="0.9" fill="#37a032"/><circle cx="7.7" cy="16.6" r="1.4" fill="#2a6a20"/><circle cx="144.3" cy="30.1" r="1.2" fill="#46b03a"/><circle cx="19.0" cy="18.6" r="1.4" fill="#5cc048"/><circle cx="88.8" cy="36.2" r="2.1" fill="#37a032"/><circle cx="40.8" cy="30.0" r="1.9" fill="#5cc048"/><circle cx="67.8" cy="39.3" r="2.2" fill="#37a032"/><circle cx="50.7" cy="25.5" r="1.2" fill="#46b03a"/><circle cx="26.1" cy="14.4" r="2.0" fill="#5cc048"/><circle cx="81.0" cy="40.2" r="1.9" fill="#37a032"/><circle cx="19.3" cy="36.8" r="2.0" fill="#8fd870"/><circle cx="148.7" cy="13.9" r="1.8" fill="#2c8a28"/><circle cx="107.2" cy="22.9" r="1.6" fill="#8fd870"/><circle cx="42.1" cy="18.6" r="1.8" fill="#c6eab0"/><circle cx="116.2" cy="35.0" r="1.5" fill="#8fd870"/><circle cx="123.8" cy="31.6" r="2.4" fill="#1f7a22"/><circle cx="94.0" cy="24.2" r="1.1" fill="#8fd870"/><circle cx="74.5" cy="14.1" r="1.1" fill="#37a032"/><circle cx="114.5" cy="20.9" r="2.5" fill="#c6eab0"/><circle cx="72.5" cy="26.2" r="1.8" fill="#37a032"/><circle cx="121.7" cy="23.5" r="0.8" fill="#5cc048"/><circle cx="123.6" cy="13.6" r="2.0" fill="#2a6a20"/><circle cx="78.1" cy="27.0" r="1.8" fill="#46b03a"/><circle cx="68.4" cy="35.1" r="1.8" fill="#1f7a22"/><circle cx="81.6" cy="35.4" r="1.5" fill="#1f7a22"/><circle cx="103.3" cy="27.6" r="1.3" fill="#37a032"/><circle cx="4.2" cy="34.7" r="1.9" fill="#46b03a"/><circle cx="46.6" cy="39.0" r="1.3" fill="#8fd870"/><circle cx="10.9" cy="34.1" r="2.0" fill="#2a6a20"/><circle cx="136.4" cy="32.3" r="2.3" fill="#8fd870"/><circle cx="73.4" cy="15.6" r="1.0" fill="#c6eab0"/><circle cx="148.1" cy="28.2" r="1.5" fill="#1f7a22"/><circle cx="102.0" cy="23.6" r="2.2" fill="#8fd870"/><circle cx="138.3" cy="30.2" r="1.5" fill="#37a032"/><circle cx="128.2" cy="37.9" r="2.0" fill="#c6eab0"/><circle cx="37.9" cy="15.8" r="1.3" fill="#2a6a20"/><circle cx="121.2" cy="15.2" r="2.5" fill="#37a032"/><circle cx="96.2" cy="34.5" r="1.2" fill="#37a032"/><circle cx="86.6" cy="30.5" r="2.0" fill="#46b03a"/><circle cx="63.4" cy="24.9" r="1.8" fill="#8fd870"/><circle cx="46.0" cy="20.9" r="1.9" fill="#c6eab0"/><circle cx="28.5" cy="13.9" r="1.0" fill="#5cc048"/><circle cx="65.9" cy="22.1" r="1.0" fill="#c6eab0"/><circle cx="110.8" cy="14.7" r="1.7" fill="#37a032"/><circle cx="48.4" cy="36.8" r="2.0" fill="#8fd870"/><circle cx="135.8" cy="30.2" r="2.2" fill="#37a032"/><circle cx="0.2" cy="31.8" r="1.0" fill="#c6eab0"/><circle cx="23.1" cy="30.2" r="1.0" fill="#2c8a28"/><circle cx="111.9" cy="35.9" r="2.2" fill="#37a032"/><circle cx="55.5" cy="35.8" r="1.2" fill="#c6eab0"/><circle cx="56.9" cy="25.8" r="2.0" fill="#37a032"/><circle cx="37.4" cy="39.4" r="1.6" fill="#1f7a22"/><circle cx="17.9" cy="29.7" r="1.5" fill="#1f7a22"/><circle cx="75.3" cy="40.0" r="2.5" fill="#37a032"/><circle cx="74.6" cy="39.3" r="2.1" fill="#1f7a22"/><circle cx="17.8" cy="26.4" r="1.4" fill="#8fd870"/><circle cx="139.6" cy="23.7" r="1.3" fill="#2c8a28"/><circle cx="97.7" cy="34.5" r="1.0" fill="#37a032"/><circle cx="45.0" cy="22.4" r="2.3" fill="#46b03a"/><circle cx="7.7" cy="24.8" r="1.2" fill="#37a032"/><circle cx="22.2" cy="40.1" r="1.8" fill="#46b03a"/><circle cx="149.7" cy="28.2" r="1.5" fill="#8fd870"/><circle cx="14.0" cy="23.0" r="2.3" fill="#1f7a22"/><circle cx="124.3" cy="16.9" r="2.3" fill="#1f7a22"/><circle cx="38.1" cy="25.8" r="1.5" fill="#37a032"/><circle cx="8.1" cy="19.1" r="2.6" fill="#2c8a28"/><circle cx="1.9" cy="27.5" r="2.5" fill="#2c8a28"/><circle cx="77.2" cy="14.5" r="1.5" fill="#46b03a"/><circle cx="130.7" cy="39.3" r="2.0" fill="#1f7a22"/><circle cx="32.8" cy="24.8" r="2.1" fill="#46b03a"/><circle cx="139.1" cy="23.6" r="2.6" fill="#5cc048"/><circle cx="135.6" cy="17.2" r="2.2" fill="#46b03a"/><circle cx="126.8" cy="15.1" r="1.5" fill="#46b03a"/><circle cx="64.1" cy="20.6" r="1.6" fill="#2a6a20"/><circle cx="0.4" cy="30.7" r="2.2" fill="#2c8a28"/><circle cx="11.7" cy="32.2" r="0.9" fill="#46b03a"/><circle cx="134.6" cy="18.5" r="0.8" fill="#2c8a28"/><circle cx="146.0" cy="29.8" r="1.0" fill="#8fd870"/><circle cx="11.7" cy="23.2" r="1.9" fill="#1f7a22"/><circle cx="28.1" cy="25.0" r="1.3" fill="#c6eab0"/><circle cx="50.8" cy="19.0" r="1.3" fill="#37a032"/><circle cx="43.1" cy="16.0" r="1.5" fill="#2a6a20"/><circle cx="56.0" cy="26.4" r="1.8" fill="#8fd870"/><circle cx="146.7" cy="16.9" r="0.8" fill="#1f7a22"/><circle cx="111.2" cy="16.7" r="1.7" fill="#1f7a22"/><circle cx="1.2" cy="34.6" r="1.6" fill="#8fd870"/><circle cx="120.5" cy="14.6" r="1.7" fill="#1f7a22"/><circle cx="105.2" cy="37.8" r="2.2" fill="#2a6a20"/><circle cx="66.8" cy="15.9" r="1.0" fill="#c6eab0"/><circle cx="86.4" cy="20.7" r="1.8" fill="#46b03a"/><circle cx="150.2" cy="21.4" r="1.1" fill="#37a032"/><circle cx="98.0" cy="14.5" r="1.2" fill="#46b03a"/><circle cx="15.0" cy="27.4" r="2.3" fill="#c6eab0"/><circle cx="126.1" cy="16.9" r="1.4" fill="#2c8a28"/><circle cx="0.6" cy="28.8" r="1.8" fill="#1f7a22"/><circle cx="9.1" cy="15.5" r="1.4" fill="#5cc048"/><circle cx="56.9" cy="22.5" r="2.3" fill="#2c8a28"/><circle cx="119.1" cy="33.8" r="1.3" fill="#1f7a22"/><circle cx="95.1" cy="23.9" r="1.9" fill="#8fd870"/><circle cx="106.7" cy="29.6" r="2.4" fill="#5cc048"/><circle cx="90.3" cy="28.8" r="2.4" fill="#c6eab0"/><circle cx="85.3" cy="13.3" r="0.9" fill="#2c8a28"/><circle cx="102.5" cy="31.2" r="0.8" fill="#46b03a"/><circle cx="17.9" cy="33.2" r="1.9" fill="#8fd870"/><circle cx="81.5" cy="32.5" r="2.1" fill="#37a032"/><circle cx="6.5" cy="33.0" r="1.3" fill="#37a032"/><circle cx="145.4" cy="32.0" r="1.3" fill="#46b03a"/><circle cx="114.7" cy="20.2" r="1.3" fill="#1f7a22"/><circle cx="133.6" cy="22.0" r="2.0" fill="#2c8a28"/><circle cx="70.8" cy="17.4" r="1.2" fill="#2a6a20"/><circle cx="47.8" cy="30.1" r="1.6" fill="#5cc048"/><rect x="0" y="0" width="6" height="14" fill="#2a8a3a"/><rect x="26" y="0" width="4" height="14" fill="#9aa497"/><rect x="36" y="0" width="9" height="11" fill="#5aa45a" opacity="0.8"/><rect x="53" y="3" width="5" height="7" fill="#cfc77a" opacity="0.4"/><rect x="141" y="0" width="11" height="13" fill="#4a9a3a"/><rect x="0" y="15" width="43" height="5" fill="#c8bca0"/><rect x="13" y="33" width="16" height="8" rx="3" fill="#1e1e22"/><rect x="56" y="24" width="12" height="17" fill="#76808c"/><path d="M46 18 L66 7" stroke="#ececec" stroke-width="3.2"/><path d="M63 9 Q78 4 94 10" stroke="#111" stroke-width="8" fill="none"/><rect x="94" y="0" width="24" height="11" fill="#d9dbd9"/><rect x="117" y="1" width="22" height="9" fill="#131313"/><path d="M90 8 Q108 10 116 24 Q112 32 99 41" stroke="#cfd2cf" stroke-width="5" fill="none"/><path d="M94 6 Q110 11 115 25 Q110 34 98 41" stroke="#141414" stroke-width="2.2" fill="none"/><circle cx="117" cy="23" r="4.2" fill="#e2e4e2"/><path d="M113 27 L99 41" stroke="#151515" stroke-width="4"/><path d="M120 11 Q135 12 150 10" stroke="#1c1c1c" stroke-width="1.2" fill="none"/></g><g filter="url(#bl2)"><ellipse cx="36" cy="25" rx="17" ry="5" fill="#f2f6ef" opacity="0.85" transform="rotate(-24 36 25)"/></g></svg><div class="a" style="left:0;top:40.8px;width:152px;height:1px;background:#d7e8c8"></div><div class="a" style="left:0;top:72px;width:108px;height:7.4px;background:#5a8a38"></div><div class="a" style="left:76px;top:72px;width:32px;height:7.4px;background:#3f6c26"></div><div class="a" style="left:116.5px;top:73.6px;width:28.5px;height:5.8px;background:#fff"></div><div class="a" style="left:116.5px;top:73.6px;width:8.5px;height:5.8px;background:#2d4f9e"></div><div class="a" style="left:120.8px;top:30px;width:21px;height:21px;border-radius:50%;background:#fff"></div><div class="a" style="left:123px;top:32.2px;width:16.6px;height:16.6px;border-radius:50%;background:#2f8fe6"></div><div class="a" style="left:127.6px;top:35.6px;width:7.4px;height:9.4px;border-radius:1px;background:#cfe6fb"></div></div>
<div class="a" style="left:36.68px;top:144.79px;font-size:8.0px;line-height:10px;color:#ffffff;font-weight:bold;transform:scaleX(1.0773);transform-origin:0 0;">Horticulture 4.0</div>
<div class="a" style="left:37.16px;top:154.30px;font-size:3.0px;line-height:4px;color:#2d4f1a;font-weight:bold;transform:scaleX(1.2677);transform-origin:0 0;">Vocational Education for Digital Transformation in Horticulture</div>
<div class="a" style="left:37.5px;top:160.8px;width:70px;height:1.0px;background:rgba(50,90,30,0.45)"></div>
<div class="a" style="left:37.5px;top:166.8px;width:47px;height:1.0px;background:rgba(50,90,30,0.4)"></div>
<div class="a" style="left:33px;top:173px;width:60px;height:1.1px;background:rgba(200,225,180,0.35)"></div>
<div class="a" style="left:33px;top:175.3px;width:45px;height:1.1px;background:rgba(200,225,180,0.35)"></div>
<div class="a" style="left:107px;top:174px;width:17px;height:1.3px;background:rgba(240,250,230,0.85)"></div>
<div class="a" style="left:25px;top:194.2px;width:156.2px;height:88.8px;background:#e8836b"></div>
<div class="a" style="left:0;top:0;width:1090px;height:581px;transform:translate(27px,196px) scale(0.19948) translate(-270px,-111px);transform-origin:0 0"><div class="a" style="left:270px;top:111px;width:762px;height:429px;background:#fff"></div>
<div class="a" style="left:270px;top:418px;width:762px;height:122px;background:#315a1d"></div>
<div class="a" style="left:503.76px;top:129.95px;font-size:36.4px;line-height:47px;color:#262626;transform:scaleX(0.9759);transform-origin:0 0;">Projekt alapadatok</div>
<div class="a" style="left:430.71px;top:222.88px;font-size:14.25px;line-height:19px;color:#262626;font-weight:bold;">3 éves futamidő –</div>
<div class="a" style="left:550.29px;top:222.88px;font-size:14.25px;line-height:19px;color:#262626;"> 2022. 03. 01.  -  2025. 02. 28.</div>
<div class="a" style="left:430.57px;top:256.78px;font-size:14.25px;line-height:19px;color:#262626;font-weight:bold;">5 Projekt eredmény</div>
<div class="a" style="left:430.57px;top:290.98px;font-size:14.25px;line-height:19px;color:#262626;font-weight:bold;">5 Partnertalálkozó</div>
<div class="a" style="left:553.32px;top:290.98px;font-size:14.25px;line-height:19px;color:#262626;"> (HU, SR, RO, HU, HU) + 2 virtuális találkozó</div>
<div class="a" style="left:430.57px;top:325.18px;font-size:14.25px;line-height:19px;color:#262626;font-weight:bold;">8 Multiplikációs esemény</div>
<div class="a" style="left:430.57px;top:359.48px;font-size:14.25px;line-height:19px;color:#262626;font-weight:bold;">5 Partner</div>
<div class="a" style="left:492.35px;top:359.48px;font-size:14.25px;line-height:19px;color:#262626;"> (3 HU, 1 RO, 1 SR)</div>
<div class="a" style="left:328.44px;top:448.88px;font-size:12.0px;line-height:16px;color:#eef3e6;transform:scaleX(0.9350);transform-origin:0 0;-webkit-text-stroke:0.15px currentColor;">CÉLCSOPORT</div>
<div class="a" style="left:329.00px;top:462.28px;font-size:12.0px;line-height:16px;color:#eef3e6;transform:scaleX(0.9289);transform-origin:0 0;-webkit-text-stroke:0.15px currentColor;">Az agrárszakképzés szakoktatói</div>
<div class="a" style="left:752.73px;top:449.69px;font-size:9.9px;line-height:13px;color:#eef3e6;transform:scaleX(0.9743);transform-origin:0 0;-webkit-text-stroke:0.15px currentColor;">KEDVEZMÉNYEZETTEK</div>
<div class="a" style="left:754.9px;top:466.8px;width:3.4px;height:3.4px;border-radius:50%;background:#f4f7f0"></div>
<div class="a" style="left:754.9px;top:493.1px;width:3.4px;height:3.4px;border-radius:50%;background:#f4f7f0"></div>
<div class="a" style="left:770.61px;top:461.08px;font-size:11.3px;line-height:15px;color:#eef3e6;transform:scaleX(0.9879);transform-origin:0 0;-webkit-text-stroke:0.15px currentColor;">Kertészeti szakképzésben részt vevő</div>
<div class="a" style="left:771.05px;top:474.28px;font-size:11.3px;line-height:15px;color:#eef3e6;transform:scaleX(0.9915);transform-origin:0 0;-webkit-text-stroke:0.15px currentColor;">diákok, hallgatók (IVET/CVET)</div>
<div class="a" style="left:770.94px;top:487.38px;font-size:11.3px;line-height:15px;color:#eef3e6;transform:scaleX(0.9876);transform-origin:0 0;-webkit-text-stroke:0.15px currentColor;">Szakképző intézmények és kertészeti</div>
<div class="a" style="left:771.50px;top:500.88px;font-size:11.3px;line-height:15px;color:#eef3e6;transform:scaleX(0.9772);transform-origin:0 0;-webkit-text-stroke:0.15px currentColor;">vállalkozások</div>
<svg class="a" style="left:580px;top:418px;" width="140" height="110" viewBox="0 0 140 110"><path d="M71.31 6.89 L69.71 7.46 L67.46 8.17 L64.75 9.04 L61.80 10.06 L58.81 11.25 L56.02 12.60 L53.40 14.11 L50.76 15.80 L48.13 17.63 L45.56 19.57 L43.10 21.59 L40.82 23.64 L38.68 25.62 L36.59 27.58 L34.57 29.64 L32.70 31.92 L31.01 34.53 L29.56 37.58 L28.38 41.42 L27.44 46.03 L26.68 50.93 L26.09 55.63 L25.63 59.64 L25.27 62.45 L25.86 62.55 L26.39 59.74 L27.01 55.76 L27.77 51.10 L28.68 46.28 L29.77 41.80 L31.04 38.18 L32.53 35.43 L34.22 33.10 L36.09 31.08 L38.12 29.24 L40.28 27.45 L42.51 25.60 L44.84 23.73 L47.31 21.92 L49.88 20.18 L52.50 18.56 L55.10 17.09 L57.62 15.81 L60.23 14.73 L63.06 13.77 L65.93 12.95 L68.62 12.27 L70.93 11.71 L72.63 11.29Z M46.73 19.95 L44.74 21.43 L41.98 23.43 L38.70 25.80 L35.12 28.38 L31.49 31.03 L28.05 33.59 L24.49 36.29 L20.56 39.31 L16.58 42.38 L12.86 45.27 L9.73 47.72 L7.49 49.50 L7.67 49.74 L10.00 48.09 L13.23 45.75 L17.04 42.99 L21.11 40.04 L25.12 37.16 L28.77 34.59 L32.30 32.16 L36.01 29.64 L39.66 27.19 L43.03 24.95 L45.88 23.07 L47.96 21.72Z M64.17 10.55 L62.33 10.98 L59.76 11.51 L56.70 12.14 L53.40 12.90 L50.12 13.81 L47.10 14.89 L44.16 16.31 L41.07 18.06 L38.02 19.96 L35.22 21.79 L32.87 23.37 L31.17 24.49 L31.33 24.75 L33.12 23.77 L35.56 22.35 L38.45 20.67 L41.56 18.95 L44.69 17.38 L47.60 16.17 L50.55 15.29 L53.78 14.57 L57.05 14.00 L60.12 13.55 L62.72 13.20 L64.62 12.94Z M67.20 12.01 L66.14 13.80 L64.62 16.22 L62.79 19.13 L60.82 22.41 L58.87 25.92 L57.10 29.51 L55.45 33.27 L53.77 37.31 L52.12 41.57 L50.57 45.94 L49.17 50.31 L47.99 54.59 L47.03 58.98 L46.23 63.60 L45.60 68.21 L45.13 72.56 L44.81 76.40 L44.66 79.51 L44.75 81.82 L45.12 83.50 L45.68 84.65 L46.27 85.40 L46.76 85.87 L47.08 86.31 L47.61 86.03 L47.40 85.45 L47.03 84.85 L46.65 84.15 L46.35 83.17 L46.18 81.72 L46.25 79.58 L46.57 76.56 L47.04 72.78 L47.68 68.51 L48.46 63.99 L49.40 59.49 L50.50 55.26 L51.80 51.15 L53.32 46.93 L55.00 42.71 L56.78 38.58 L58.58 34.67 L60.33 31.09 L62.16 27.73 L64.18 24.45 L66.23 21.35 L68.17 18.58 L69.83 16.24 L71.06 14.51Z M69.43 14.17 L69.49 16.74 L69.54 20.28 L69.58 24.47 L69.59 29.00 L69.56 33.55 L69.49 37.79 L69.32 41.72 L69.06 45.60 L68.76 49.54 L68.48 53.60 L68.27 57.89 L68.21 62.48 L68.32 67.81 L68.56 73.88 L68.87 80.16 L69.22 86.09 L69.54 91.12 L69.78 94.71 L70.38 94.69 L70.34 91.09 L70.23 86.05 L70.09 80.11 L69.98 73.84 L69.95 67.79 L70.05 62.52 L70.32 58.00 L70.72 53.79 L71.21 49.78 L71.71 45.87 L72.18 41.96 L72.56 37.96 L72.84 33.66 L73.08 29.08 L73.27 24.54 L73.45 20.34 L73.60 16.80 L73.75 14.24Z M72.83 14.61 L73.45 17.14 L74.28 20.61 L75.24 24.74 L76.25 29.22 L77.24 33.78 L78.12 38.13 L78.91 42.30 L79.67 46.52 L80.41 50.83 L81.12 55.24 L81.80 59.79 L82.46 64.49 L83.12 69.77 L83.78 75.68 L84.41 81.73 L84.98 87.41 L85.48 92.22 L85.88 95.67 L86.47 95.62 L86.27 92.16 L85.96 87.33 L85.58 81.63 L85.14 75.56 L84.67 69.61 L84.20 64.30 L83.73 59.55 L83.23 54.96 L82.71 50.50 L82.16 46.14 L81.58 41.86 L80.97 37.63 L80.28 33.21 L79.47 28.58 L78.64 24.03 L77.87 19.86 L77.22 16.35 L76.79 13.79Z M76.03 13.73 L77.56 15.37 L79.67 17.58 L82.12 20.21 L84.71 23.13 L87.23 26.21 L89.48 29.33 L91.54 32.61 L93.58 36.21 L95.57 40.00 L97.51 43.90 L99.37 47.81 L101.14 51.62 L102.84 55.55 L104.49 59.75 L106.07 63.96 L107.54 67.93 L108.89 71.42 L110.10 74.17 L111.15 76.09 L112.07 77.32 L112.87 78.05 L113.53 78.42 L114.01 78.60 L114.39 78.83 L114.78 78.37 L114.44 77.98 L114.02 77.65 L113.58 77.25 L113.03 76.58 L112.34 75.41 L111.49 73.55 L110.47 70.82 L109.28 67.31 L107.95 63.29 L106.51 59.01 L104.99 54.71 L103.40 50.65 L101.76 46.74 L100.02 42.73 L98.20 38.72 L96.31 34.78 L94.35 31.01 L92.33 27.49 L90.08 24.10 L87.57 20.78 L85.02 17.67 L82.65 14.90 L80.67 12.60 L79.28 10.89Z M78.83 12.59 L81.41 13.65 L85.02 15.11 L89.23 16.86 L93.67 18.81 L97.93 20.83 L101.62 22.84 L104.86 24.90 L108.00 27.11 L110.99 29.43 L113.80 31.79 L116.40 34.16 L118.77 36.48 L120.93 38.91 L122.92 41.56 L124.71 44.23 L126.27 46.71 L127.58 48.80 L128.60 50.31 L128.98 50.07 L128.11 48.49 L126.95 46.31 L125.53 43.72 L123.86 40.93 L121.96 38.12 L119.86 35.49 L117.56 33.00 L115.02 30.46 L112.26 27.91 L109.31 25.41 L106.20 23.00 L102.92 20.72 L99.17 18.48 L94.89 16.25 L90.46 14.13 L86.28 12.20 L82.75 10.59 L80.26 9.38Z M79.18 10.87 L82.16 11.85 L86.33 13.21 L91.21 14.84 L96.39 16.65 L101.39 18.55 L105.79 20.44 L109.84 22.53 L113.95 24.95 L117.92 27.46 L121.53 29.84 L124.56 31.85 L126.81 33.27 L126.98 33.02 L124.82 31.48 L121.88 29.34 L118.35 26.82 L114.44 24.17 L110.37 21.60 L106.33 19.33 L101.93 17.27 L96.94 15.21 L91.79 13.24 L86.93 11.46 L82.83 9.96 L79.91 8.83Z M35.08 29.72 L34.24 31.17 L32.97 33.15 L31.48 35.53 L29.98 38.13 L28.69 40.81 L27.81 43.40 L27.44 46.10 L27.39 49.03 L27.55 51.98 L27.82 54.74 L28.09 57.06 L28.26 58.72 L28.56 58.70 L28.55 57.03 L28.43 54.69 L28.32 51.95 L28.31 49.03 L28.51 46.21 L29.00 43.72 L29.95 41.37 L31.32 38.89 L32.91 36.44 L34.51 34.19 L35.91 32.28 L36.89 30.89Z M42.68 37.53 L41.98 39.45 L40.95 42.13 L39.73 45.29 L38.47 48.65 L37.32 51.90 L36.41 54.76 L35.74 57.39 L35.19 60.03 L34.75 62.55 L34.41 64.84 L34.14 66.74 L33.94 68.15 L34.24 68.21 L34.57 66.82 L34.97 64.93 L35.44 62.68 L36.00 60.20 L36.67 57.63 L37.45 55.09 L38.47 52.31 L39.74 49.14 L41.12 45.85 L42.45 42.75 L43.61 40.11 L44.44 38.23Z M53.05 41.27 L52.17 43.52 L50.90 46.58 L49.40 50.23 L47.80 54.23 L46.25 58.34 L44.90 62.32 L43.67 66.53 L42.44 71.22 L41.25 76.02 L40.19 80.53 L39.31 84.34 L38.68 87.08 L38.97 87.16 L39.74 84.45 L40.76 80.67 L41.96 76.20 L43.28 71.45 L44.65 66.81 L46.01 62.68 L47.48 58.80 L49.14 54.78 L50.86 50.86 L52.49 47.27 L53.89 44.26 L54.91 42.06Z M51.05 65.48 L49.58 65.69 L47.50 65.91 L45.03 66.18 L42.42 66.55 L39.90 67.05 L37.71 67.73 L35.77 68.72 L33.88 69.98 L32.12 71.37 L30.56 72.72 L29.27 73.88 L28.32 74.69 L28.50 74.93 L29.53 74.19 L30.89 73.12 L32.51 71.86 L34.30 70.59 L36.18 69.46 L38.05 68.63 L40.14 68.09 L42.59 67.71 L45.17 67.46 L47.62 67.30 L49.72 67.19 L51.22 67.09Z M47.74 67.59 L46.93 68.43 L45.76 69.56 L44.36 70.91 L42.90 72.40 L41.50 73.94 L40.33 75.48 L39.34 77.12 L38.43 78.96 L37.59 80.83 L36.87 82.60 L36.28 84.09 L35.85 85.16 L36.12 85.29 L36.65 84.26 L37.35 82.81 L38.16 81.10 L39.09 79.29 L40.08 77.55 L41.11 76.04 L42.31 74.65 L43.73 73.23 L45.25 71.85 L46.70 70.59 L47.95 69.54 L48.85 68.77Z M59.80 34.06 L59.77 36.19 L59.73 39.19 L59.67 42.71 L59.56 46.41 L59.40 49.94 L59.18 52.97 L58.84 55.65 L58.39 58.28 L57.87 60.77 L57.37 63.00 L56.95 64.86 L56.67 66.25 L56.96 66.32 L57.35 64.96 L57.88 63.12 L58.49 60.92 L59.11 58.44 L59.68 55.79 L60.14 53.09 L60.47 50.02 L60.74 46.47 L60.95 42.76 L61.13 39.23 L61.28 36.24 L61.42 34.12Z M65.57 32.01 L65.19 33.64 L64.61 35.88 L63.94 38.55 L63.23 41.47 L62.58 44.43 L62.06 47.27 L61.66 50.22 L61.31 53.48 L61.02 56.79 L60.78 59.88 L60.59 62.50 L60.46 64.38 L60.76 64.41 L60.99 62.54 L61.27 59.93 L61.61 56.85 L62.00 53.56 L62.45 50.33 L62.94 47.43 L63.55 44.64 L64.29 41.73 L65.09 38.86 L65.86 36.23 L66.52 34.01 L67.01 32.39Z M69.93 61.70 L69.09 61.92 L67.89 62.16 L66.46 62.46 L64.95 62.84 L63.50 63.34 L62.25 63.99 L61.20 64.88 L60.25 65.98 L59.41 67.17 L58.67 68.32 L58.08 69.30 L57.64 69.99 L57.89 70.16 L58.42 69.53 L59.10 68.61 L59.91 67.54 L60.82 66.46 L61.78 65.50 L62.75 64.80 L63.88 64.34 L65.24 63.98 L66.71 63.73 L68.12 63.54 L69.34 63.41 L70.23 63.30Z M69.01 64.12 L68.55 65.39 L67.88 67.17 L67.09 69.26 L66.26 71.49 L65.51 73.68 L64.91 75.63 L64.48 77.46 L64.12 79.34 L63.83 81.15 L63.60 82.80 L63.43 84.19 L63.30 85.20 L63.59 85.25 L63.82 84.25 L64.09 82.88 L64.42 81.25 L64.80 79.47 L65.25 77.65 L65.77 75.89 L66.44 74.01 L67.28 71.88 L68.19 69.70 L69.07 67.65 L69.84 65.91 L70.39 64.67Z M69.83 72.37 L70.39 73.15 L71.18 74.22 L72.07 75.48 L72.98 76.87 L73.78 78.29 L74.38 79.68 L74.79 81.19 L75.07 82.95 L75.26 84.77 L75.39 86.50 L75.49 87.97 L75.61 89.02 L75.91 89.01 L75.89 87.95 L75.89 86.48 L75.85 84.74 L75.76 82.88 L75.57 81.05 L75.24 79.41 L74.68 77.88 L73.92 76.33 L73.07 74.85 L72.24 73.51 L71.55 72.39 L71.08 71.57Z M75.02 34.00 L74.85 35.67 L74.59 38.00 L74.28 40.76 L73.95 43.70 L73.65 46.59 L73.42 49.20 L73.24 51.68 L73.10 54.27 L72.97 56.80 L72.88 59.12 L72.81 61.07 L72.77 62.49 L73.07 62.51 L73.21 61.09 L73.38 59.15 L73.57 56.84 L73.79 54.32 L74.04 51.75 L74.31 49.29 L74.64 46.71 L75.04 43.84 L75.46 40.91 L75.87 38.17 L76.23 35.85 L76.49 34.19Z M80.69 49.55 L81.29 50.84 L82.10 52.48 L83.03 54.46 L84.00 56.80 L84.92 59.51 L85.70 62.59 L86.37 66.52 L87.00 71.38 L87.58 76.62 L88.09 81.67 L88.52 86.00 L88.87 89.03 L89.16 89.00 L88.93 85.96 L88.61 81.63 L88.20 76.56 L87.73 71.30 L87.21 66.40 L86.65 62.41 L85.96 59.23 L85.12 56.41 L84.23 53.97 L83.38 51.90 L82.67 50.23 L82.19 48.93Z M83.53 62.95 L84.30 64.12 L85.35 65.70 L86.58 67.59 L87.90 69.69 L89.22 71.89 L90.45 74.09 L91.68 76.53 L93.00 79.35 L94.33 82.28 L95.57 85.05 L96.62 87.40 L97.40 89.07 L97.68 88.96 L97.01 87.24 L96.07 84.84 L94.94 82.02 L93.72 79.04 L92.50 76.16 L91.37 73.63 L90.23 71.34 L89.00 69.06 L87.78 66.88 L86.64 64.91 L85.70 63.27 L85.03 62.05Z M85.52 66.12 L85.19 67.56 L84.66 69.57 L84.05 71.95 L83.48 74.53 L83.06 77.12 L82.92 79.55 L83.15 81.96 L83.65 84.52 L84.30 87.07 L85.00 89.43 L85.61 91.41 L86.03 92.84 L86.32 92.77 L85.99 91.31 L85.46 89.30 L84.85 86.93 L84.28 84.39 L83.88 81.86 L83.75 79.55 L83.96 77.24 L84.45 74.74 L85.10 72.22 L85.79 69.88 L86.41 67.90 L86.83 66.46Z M88.17 30.08 L87.85 31.53 L87.34 33.54 L86.74 35.93 L86.18 38.52 L85.78 41.12 L85.66 43.56 L85.90 45.98 L86.42 48.55 L87.10 51.10 L87.81 53.45 L88.44 55.43 L88.87 56.86 L89.16 56.78 L88.84 55.32 L88.33 53.31 L87.74 50.94 L87.19 48.39 L86.80 45.87 L86.69 43.56 L86.92 41.27 L87.43 38.78 L88.09 36.28 L88.80 33.94 L89.43 31.96 L89.86 30.52Z M89.90 20.92 L90.13 22.74 L90.39 25.25 L90.71 28.24 L91.10 31.51 L91.60 34.83 L92.23 38.00 L93.10 41.28 L94.21 44.88 L95.41 48.52 L96.59 51.93 L97.61 54.80 L98.34 56.86 L98.63 56.77 L98.03 54.67 L97.15 51.75 L96.11 48.30 L95.05 44.63 L94.09 41.01 L93.37 37.76 L92.89 34.63 L92.54 31.34 L92.29 28.10 L92.13 25.11 L92.01 22.59 L91.92 20.74Z M97.81 45.90 L98.61 47.01 L99.70 48.45 L100.96 50.19 L102.29 52.20 L103.56 54.47 L104.66 56.98 L105.66 60.09 L106.65 63.92 L107.59 68.01 L108.44 71.95 L109.15 75.32 L109.70 77.68 L110.00 77.62 L109.56 75.23 L108.95 71.85 L108.20 67.88 L107.37 63.75 L106.48 59.87 L105.57 56.66 L104.53 54.02 L103.31 51.61 L102.04 49.48 L100.85 47.65 L99.85 46.15 L99.16 45.01Z M105.75 61.28 L106.62 61.63 L107.83 62.11 L109.24 62.68 L110.73 63.34 L112.15 64.04 L113.38 64.76 L114.50 65.60 L115.64 66.60 L116.73 67.68 L117.73 68.70 L118.57 69.57 L119.21 70.18 L119.43 69.97 L118.87 69.30 L118.10 68.37 L117.17 67.27 L116.13 66.11 L115.02 65.00 L113.90 64.03 L112.64 63.18 L111.22 62.36 L109.74 61.61 L108.36 60.93 L107.19 60.36 L106.37 59.93Z M94.04 25.20 L95.36 26.63 L97.22 28.63 L99.38 31.00 L101.65 33.52 L103.81 35.99 L105.65 38.19 L107.26 40.28 L108.82 42.45 L110.28 44.57 L111.58 46.51 L112.68 48.14 L113.51 49.32 L113.76 49.16 L113.03 47.92 L112.04 46.22 L110.84 44.21 L109.47 42.01 L108.00 39.75 L106.47 37.57 L104.70 35.26 L102.62 32.70 L100.43 30.08 L98.35 27.63 L96.59 25.55 L95.36 24.04Z M111.33 38.58 L112.39 39.14 L113.84 39.92 L115.56 40.86 L117.40 41.89 L119.24 42.95 L120.95 43.96 L122.66 45.04 L124.51 46.25 L126.36 47.49 L128.08 48.65 L129.53 49.62 L130.59 50.31 L130.77 50.07 L129.77 49.29 L128.38 48.22 L126.72 46.97 L124.93 45.64 L123.14 44.34 L121.47 43.16 L119.81 42.04 L118.01 40.88 L116.21 39.75 L114.55 38.71 L113.15 37.83 L112.15 37.18Z M116.79 43.95 L117.50 45.00 L118.49 46.50 L119.64 48.25 L120.81 50.08 L121.88 51.81 L122.71 53.23 L123.30 54.41 L123.76 55.53 L124.12 56.54 L124.41 57.44 L124.64 58.19 L124.86 58.75 L125.14 58.67 L125.03 58.09 L124.89 57.32 L124.69 56.38 L124.42 55.30 L124.03 54.11 L123.51 52.83 L122.74 51.32 L121.75 49.52 L120.65 47.63 L119.58 45.82 L118.67 44.27 L118.06 43.17Z M105.76 25.22 L107.06 25.83 L108.88 26.69 L111.03 27.71 L113.27 28.79 L115.41 29.81 L117.24 30.67 L118.83 31.42 L120.37 32.14 L121.80 32.80 L123.07 33.39 L124.13 33.87 L124.93 34.23 L125.07 33.96 L124.31 33.53 L123.28 32.97 L122.05 32.30 L120.66 31.56 L119.16 30.76 L117.61 29.93 L115.82 28.99 L113.72 27.89 L111.51 26.74 L109.41 25.64 L107.62 24.70 L106.36 24.02Z M33.68 41.05 L32.43 41.93 L30.65 43.16 L28.55 44.60 L26.35 46.12 L24.26 47.59 L22.47 48.88 L20.92 50.04 L19.43 51.21 L18.05 52.32 L16.82 53.32 L15.81 54.17 L15.06 54.81 L15.24 55.04 L16.05 54.49 L17.13 53.72 L18.41 52.79 L19.85 51.77 L21.39 50.69 L22.98 49.61 L24.81 48.41 L26.96 47.03 L29.21 45.60 L31.36 44.24 L33.19 43.09 L34.50 42.29Z " fill="#f4f5ef" style="filter:blur(0.3px)"/></svg>
<svg class="a" style="left:580px;top:418px;" width="140" height="110" viewBox="0 0 140 110"><ellipse cx="72" cy="10.5" rx="6" ry="2.6" fill="#f4f5ef" style="filter:blur(0.6px)"/><ellipse cx="71" cy="13" rx="3" ry="3" fill="#f4f5ef" style="filter:blur(0.6px)"/></svg></div>
<div class="a" style="left:27px;top:294.1px;width:152px;height:85px;background:radial-gradient(ellipse 22% 32% at 60% 6%, rgba(160,215,120,0.55), transparent),radial-gradient(ellipse 14% 50% at 57% 55%, rgba(120,190,80,0.35), transparent),radial-gradient(ellipse 30% 30% at 18% 88%, rgba(110,180,70,0.35), transparent),radial-gradient(ellipse 20% 40% at 35% 30%, rgba(90,160,60,0.25), transparent),linear-gradient(90deg,#2b6b1b 0%,#357c24 25%,#418d2e 50%,#3a8429 65%,#2b6e1d 82%,#1e5612 100%)"></div>
<svg class="a" style="left:148px;top:349px;" width="30" height="28" viewBox="0 0 30 28"><path d="M14 25 Q3 24 1 15 Q11 11 18 20Z" fill="rgba(205,238,180,0.40)"/><path d="M2 15 Q10 18 16 23" stroke="rgba(230,250,215,0.55)" stroke-width="0.5" fill="none"/><path d="M16 24 Q10 10 27 1 Q31 19 16 24Z" fill="rgba(205,238,180,0.45)"/><path d="M17 23 Q20 12 26 3 M19 17 L23 15 M18 20 L22 19 M20 13 L24 10 M19 17 L17 12 M20 13 L19 9" stroke="rgba(230,250,215,0.6)" stroke-width="0.5" fill="none"/></svg>
<div class="a" style="left:33.32px;top:297.19px;font-size:7.6px;line-height:10px;color:#e9f3dc;transform:scaleX(0.9506);transform-origin:0 0;">Projekteredmények:</div>
<div class="a" style="left:40.70px;top:310.70px;width:9.2px;height:9.2px;border-radius:50%;background:#fafaf5"></div>
<div class="a" style="left:43.85px;top:312.29px;font-size:5px;line-height:6px;color:#d4a340;">1</div>
<div class="a" style="left:40.70px;top:323.00px;width:9.2px;height:9.2px;border-radius:50%;background:#fafaf5"></div>
<div class="a" style="left:43.96px;top:324.59px;font-size:5px;line-height:6px;color:#c99a3a;transform:scaleX(0.9565);transform-origin:0 0;">2</div>
<div class="a" style="left:40.70px;top:334.40px;width:9.2px;height:9.2px;border-radius:50%;background:#fafaf5"></div>
<div class="a" style="left:44.01px;top:335.99px;font-size:5px;line-height:6px;color:#7a7a7a;transform:scaleX(0.9362);transform-origin:0 0;">3</div>
<div class="a" style="left:40.70px;top:345.90px;width:9.2px;height:9.2px;border-radius:50%;background:#fafaf5"></div>
<div class="a" style="left:44.11px;top:347.49px;font-size:5px;line-height:6px;color:#6a7a9a;transform:scaleX(0.8627);transform-origin:0 0;">4</div>
<div class="a" style="left:40.70px;top:358.20px;width:9.2px;height:9.2px;border-radius:50%;background:#fafaf5"></div>
<div class="a" style="left:44.02px;top:359.79px;font-size:5px;line-height:6px;color:#4a5aa0;transform:scaleX(0.9167);transform-origin:0 0;">5</div>
<div class="a" style="left:53.5px;top:313.0px;width:114.5px;height:3.2px;overflow:hidden;font-size:2.6px;line-height:3.2px;color:rgba(245,250,238,0.90);font-weight:bold;filter:blur(0.15px)">tananyag szakképzés tananyag tananyag szakképzés hallgatók fenntartható növénytermesztés szakképzés tananyag platform hallgatók növénytermesztés intelligens tananyag rendszerének növénytermesztés intelligens szakképzés program platform Az hallgatók kompetenciafejlesztése</div>
<div class="a" style="left:53.5px;top:316.6px;width:46.5px;height:3.2px;overflow:hidden;font-size:2.6px;line-height:3.2px;color:rgba(245,250,238,0.90);font-weight:bold;filter:blur(0.15px)">tananyag platform program hallgatók platform növénytermesztés hallgatók Az szakképzés intelligens</div>
<div class="a" style="left:53.5px;top:326.0px;width:62.5px;height:3.2px;overflow:hidden;font-size:2.6px;line-height:3.2px;color:rgba(245,250,238,0.90);font-weight:bold;filter:blur(0.15px)">Az Az fenntartható fenntartható hallgatók Az tananyag digitális tananyag hallgatók fenntartható szakképzés</div>
<div class="a" style="left:53.5px;top:335.9px;width:48.5px;height:3.2px;overflow:hidden;font-size:2.6px;line-height:3.2px;color:rgba(245,250,238,0.90);font-weight:bold;filter:blur(0.15px)">fenntartható platform rendszerének tananyag Az platform intelligens tananyag platform rendszerének</div>
<div class="a" style="left:53.5px;top:339.2px;width:77.5px;height:3.2px;overflow:hidden;font-size:2.6px;line-height:3.2px;color:rgba(245,250,238,0.90);font-weight:bold;filter:blur(0.15px)">kompetenciafejlesztése szakképzés intelligens program rendszerének digitális fenntartható szakképzés rendszerének Az intelligens hallgatók intelligens kompetenciafejlesztése intelligens rendszerének</div>
<div class="a" style="left:53.5px;top:347.4px;width:54.5px;height:3.2px;overflow:hidden;font-size:2.6px;line-height:3.2px;color:rgba(245,250,238,0.90);font-weight:bold;filter:blur(0.15px)">kompetenciafejlesztése intelligens Az platform Az fenntartható fenntartható Az tananyag kompetenciafejlesztése program kompetenciafejlesztése</div>
<div class="a" style="left:53.5px;top:350.7px;width:68.5px;height:3.2px;overflow:hidden;font-size:2.6px;line-height:3.2px;color:rgba(245,250,238,0.90);font-weight:bold;filter:blur(0.15px)">kompetenciafejlesztése intelligens hallgatók platform fenntartható platform rendszerének digitális intelligens rendszerének digitális Az kompetenciafejlesztése intelligens</div>
<div class="a" style="left:53.5px;top:361.2px;width:86.5px;height:3.2px;overflow:hidden;font-size:2.6px;line-height:3.2px;color:rgba(245,250,238,0.90);font-weight:bold;filter:blur(0.15px)">növénytermesztés fenntartható program intelligens Az Az tananyag tananyag növénytermesztés platform szakképzés fenntartható tananyag szakképzés fenntartható program növénytermesztés kompetenciafejlesztése</div>
<div class="a" style="left:27px;top:392px;width:152px;height:85px;background:radial-gradient(ellipse 22% 32% at 60% 6%, rgba(160,215,120,0.55), transparent),radial-gradient(ellipse 14% 50% at 57% 55%, rgba(120,190,80,0.35), transparent),radial-gradient(ellipse 30% 30% at 18% 88%, rgba(110,180,70,0.35), transparent),radial-gradient(ellipse 20% 40% at 35% 30%, rgba(90,160,60,0.25), transparent),linear-gradient(90deg,#2b6b1b 0%,#357c24 25%,#418d2e 50%,#3a8429 65%,#2b6e1d 82%,#1e5612 100%)"></div>
<svg class="a" style="left:148px;top:447px;" width="30" height="28" viewBox="0 0 30 28"><path d="M14 25 Q3 24 1 15 Q11 11 18 20Z" fill="rgba(205,238,180,0.40)"/><path d="M2 15 Q10 18 16 23" stroke="rgba(230,250,215,0.55)" stroke-width="0.5" fill="none"/><path d="M16 24 Q10 10 27 1 Q31 19 16 24Z" fill="rgba(205,238,180,0.45)"/><path d="M17 23 Q20 12 26 3 M19 17 L23 15 M18 20 L22 19 M20 13 L24 10 M19 17 L17 12 M20 13 L19 9" stroke="rgba(230,250,215,0.6)" stroke-width="0.5" fill="none"/></svg>
<div class="a" style="left:40.70px;top:395.90px;width:9.2px;height:9.2px;border-radius:50%;background:#fafaf5"></div>
<div class="a" style="left:43.85px;top:397.49px;font-size:5px;line-height:6px;color:#d4a340;">1</div>
<div class="a" style="left:53.5px;top:396.9px;width:114.5px;height:3.2px;overflow:hidden;font-size:2.6px;line-height:3.2px;color:rgba(245,250,238,0.90);font-weight:bold;filter:blur(0.15px)">platform kompetenciafejlesztése intelligens kompetenciafejlesztése kompetenciafejlesztése fenntartható Az rendszerének hallgatók rendszerének Az fenntartható növénytermesztés kompetenciafejlesztése hallgatók platform hallgatók intelligens Az növénytermesztés fenntartható tananyag rendszerének Az</div>
<div class="a" style="left:53.5px;top:400.2px;width:46.5px;height:3.2px;overflow:hidden;font-size:2.6px;line-height:3.2px;color:rgba(245,250,238,0.90);font-weight:bold;filter:blur(0.15px)">hallgatók digitális rendszerének kompetenciafejlesztése intelligens intelligens intelligens fenntartható hallgatók platform</div>
<div class="a" style="left:38.5px;top:410.4px;width:73.5px;height:3.2px;overflow:hidden;font-size:2.6px;line-height:3.2px;color:rgba(245,250,238,0.90);font-weight:bold;filter:blur(0.15px)">fenntartható Az hallgatók digitális digitális hallgatók tananyag növénytermesztés hallgatók tananyag hallgatók növénytermesztés kompetenciafejlesztése növénytermesztés platform növénytermesztés</div>
<div class="a" style="left:38.5px;top:416.9px;width:116.5px;height:3.2px;overflow:hidden;font-size:2.6px;line-height:3.2px;color:rgba(245,250,238,0.90);font-weight:bold;filter:blur(0.15px)">rendszerének fenntartható hallgatók fenntartható program fenntartható növénytermesztés program platform szakképzés fenntartható platform kompetenciafejlesztése tananyag hallgatók intelligens kompetenciafejlesztése Az intelligens intelligens Az szakképzés rendszerének fenntartható</div>
<div class="a" style="left:49.0px;top:423.9px;width:33.0px;height:3.2px;overflow:hidden;font-size:2.6px;line-height:3.2px;color:rgba(245,250,238,0.95);font-weight:bold;filter:blur(0.15px)">program program kompetenciafejlesztése rendszerének kompetenciafejlesztése hallgatók</div>
<div class="a" style="left:38.5px;top:430.9px;width:129.5px;height:3.2px;overflow:hidden;font-size:2.6px;line-height:3.2px;color:rgba(245,250,238,0.90);font-weight:bold;filter:blur(0.15px)">tananyag rendszerének szakképzés növénytermesztés program intelligens növénytermesztés fenntartható tananyag szakképzés platform hallgatók hallgatók intelligens rendszerének fenntartható fenntartható program Az intelligens rendszerének kompetenciafejlesztése tananyag fenntartható Az Az növénytermesztés rendszerének</div>
<div class="a" style="left:49.0px;top:437.4px;width:51.0px;height:3.2px;overflow:hidden;font-size:2.6px;line-height:3.2px;color:rgba(245,250,238,0.95);font-weight:bold;filter:blur(0.15px)">digitális szakképzés hallgatók növénytermesztés intelligens digitális növénytermesztés tananyag digitális platform</div>
<div class="a" style="left:38.5px;top:444.4px;width:123.5px;height:3.2px;overflow:hidden;font-size:2.6px;line-height:3.2px;color:rgba(245,250,238,0.90);font-weight:bold;filter:blur(0.15px)">program program szakképzés hallgatók növénytermesztés hallgatók Az Az tananyag digitális program rendszerének Az Az hallgatók platform intelligens tananyag intelligens program rendszerének digitális növénytermesztés intelligens intelligens tananyag</div>
<div class="a" style="left:42.0px;top:447.4px;width:53.0px;height:3.2px;overflow:hidden;font-size:2.6px;line-height:3.2px;color:rgba(245,250,238,0.90);font-weight:bold;filter:blur(0.15px)">szakképzés digitális program Az program program program növénytermesztés digitális digitális</div>
<div class="a" style="left:27px;top:490px;width:152px;height:79px;overflow:hidden">
<div class="a" style="left:0px;top:0px;width:152px;height:85px;background:radial-gradient(ellipse 22% 32% at 60% 6%, rgba(160,215,120,0.55), transparent),radial-gradient(ellipse 14% 50% at 57% 55%, rgba(120,190,80,0.35), transparent),radial-gradient(ellipse 30% 30% at 18% 88%, rgba(110,180,70,0.35), transparent),radial-gradient(ellipse 20% 40% at 35% 30%, rgba(90,160,60,0.25), transparent),linear-gradient(90deg,#2b6b1b 0%,#357c24 25%,#418d2e 50%,#3a8429 65%,#2b6e1d 82%,#1e5612 100%)"></div>
</div>
<svg class="a" style="left:148px;top:545px;" width="30" height="28" viewBox="0 0 30 28"><path d="M14 25 Q3 24 1 15 Q11 11 18 20Z" fill="rgba(205,238,180,0.40)"/><path d="M2 15 Q10 18 16 23" stroke="rgba(230,250,215,0.55)" stroke-width="0.5" fill="none"/><path d="M16 24 Q10 10 27 1 Q31 19 16 24Z" fill="rgba(205,238,180,0.45)"/><path d="M17 23 Q20 12 26 3 M19 17 L23 15 M18 20 L22 19 M20 13 L24 10 M19 17 L17 12 M20 13 L19 9" stroke="rgba(230,250,215,0.6)" stroke-width="0.5" fill="none"/></svg>
<div class="a" style="left:40.70px;top:493.90px;width:9.2px;height:9.2px;border-radius:50%;background:#fafaf5"></div>
<div class="a" style="left:43.96px;top:495.49px;font-size:5px;line-height:6px;color:#c99a3a;transform:scaleX(0.9565);transform-origin:0 0;">2</div>
<div class="a" style="left:53.5px;top:496.9px;width:48.5px;height:3.2px;overflow:hidden;font-size:2.6px;line-height:3.2px;color:rgba(245,250,238,0.90);font-weight:bold;filter:blur(0.15px)">intelligens platform tananyag intelligens kompetenciafejlesztése Az tananyag hallgatók Az hallgatók</div>
<div class="a" style="left:38.5px;top:508.4px;width:61.5px;height:3.2px;overflow:hidden;font-size:2.6px;line-height:3.2px;color:rgba(245,250,238,0.90);font-weight:bold;filter:blur(0.15px)">platform kompetenciafejlesztése kompetenciafejlesztése hallgatók Az hallgatók intelligens intelligens intelligens platform intelligens rendszerének</div>
<div class="a" style="left:38.5px;top:514.4px;width:41.5px;height:3.2px;overflow:hidden;font-size:2.6px;line-height:3.2px;color:rgba(245,250,238,0.90);font-weight:bold;filter:blur(0.15px)">kompetenciafejlesztése program digitális kompetenciafejlesztése program program hallgatók tananyag</div>
<div class="a" style="left:45.0px;top:521.9px;width:30.0px;height:3.2px;overflow:hidden;font-size:2.6px;line-height:3.2px;color:rgba(245,250,238,0.95);font-weight:bold;filter:blur(0.15px)">tananyag tananyag szakképzés intelligens szakképzés szakképzés</div>
<div class="a" style="left:45.0px;top:525.4px;width:70.0px;height:3.2px;overflow:hidden;font-size:2.6px;line-height:3.2px;color:rgba(245,250,238,0.90);font-weight:bold;filter:blur(0.15px)">Az rendszerének hallgatók intelligens tananyag Az fenntartható program intelligens tananyag hallgatók platform tananyag rendszerének</div>
<div class="a" style="left:45.0px;top:528.9px;width:70.0px;height:3.2px;overflow:hidden;font-size:2.6px;line-height:3.2px;color:rgba(245,250,238,0.90);font-weight:bold;filter:blur(0.15px)">Az digitális rendszerének növénytermesztés platform hallgatók fenntartható szakképzés növénytermesztés digitális platform tananyag tananyag fenntartható</div>
<div class="a" style="left:38.5px;top:535.9px;width:121.5px;height:3.2px;overflow:hidden;font-size:2.6px;line-height:3.2px;color:rgba(245,250,238,0.90);font-weight:bold;filter:blur(0.15px)">digitális kompetenciafejlesztése platform rendszerének fenntartható platform kompetenciafejlesztése fenntartható fenntartható kompetenciafejlesztése fenntartható hallgatók digitális fenntartható növénytermesztés növénytermesztés tananyag digitális Az program intelligens rendszerének növénytermesztés intelligens tananyag tananyag</div>
<div class="a" style="left:45.0px;top:542.9px;width:120.0px;height:3.2px;overflow:hidden;font-size:2.6px;line-height:3.2px;color:rgba(245,250,238,0.90);font-weight:bold;filter:blur(0.15px)">rendszerének fenntartható kompetenciafejlesztése kompetenciafejlesztése platform szakképzés tananyag platform digitális program hallgatók tananyag digitális intelligens Az rendszerének hallgatók Az platform program rendszerének hallgatók digitális rendszerének platform hallgatók</div>
<div class="a" style="left:38.5px;top:548.9px;width:111.5px;height:3.2px;overflow:hidden;font-size:2.6px;line-height:3.2px;color:rgba(245,250,238,0.90);font-weight:bold;filter:blur(0.15px)">Az platform növénytermesztés kompetenciafejlesztése tananyag fenntartható Az rendszerének fenntartható növénytermesztés Az platform intelligens tananyag intelligens platform szakképzés platform platform digitális intelligens platform fenntartható fenntartható</div>
<div class="a" style="left:10.88px;top:569.99px;font-size:7.6px;line-height:10px;color:#555;transform:scaleX(0.8589);transform-origin:0 0;">Dia 2 / 9</div>
<svg class="a" style="left:44.5px;top:571px;" width="10" height="9" viewBox="0 0 10 9"><path d="M0.8 1 Q2.8 0.2 4.6 1.4 V8.2 Q2.8 7 0.8 7.8Z M4.6 1.4 Q6.4 0.2 8.4 1 V4" fill="none" stroke="#666" stroke-width="0.8"/><path d="M6.2 8 L8.8 5.2" stroke="#666" stroke-width="0.8"/></svg>
<div class="a" style="left:62.92px;top:570.59px;font-size:7.6px;line-height:10px;color:#444;transform:scaleX(0.8355);transform-origin:0 0;">magyar</div>
<svg class="a" style="left:785px;top:571px;" width="8" height="9" viewBox="0 0 8 9"><path d="M4 0.6 V3 M2.6 1.8 L4 0.6 L5.4 1.8" fill="none" stroke="#777" stroke-width="0.7"/><rect x="0.8" y="4" width="6.4" height="4.4" fill="#9a9a9a"/></svg>
<div class="a" style="left:794.64px;top:570.29px;font-size:7.6px;line-height:10px;color:#444;transform:scaleX(0.8176);transform-origin:0 0;">Jegyzetek</div>
<svg class="a" style="left:833.5px;top:571.5px;" width="9" height="9" viewBox="0 0 9 9"><path d="M0.6 0.6 H8.2 V5.8 H3.6 L1.6 7.8 V5.8 H0.6Z" fill="#555"/></svg>
<div class="a" style="left:843.39px;top:570.29px;font-size:7.6px;line-height:10px;color:#444;transform:scaleX(0.8362);transform-origin:0 0;">Megjegyzések</div>
<div class="a" style="left:895.2px;top:569.4px;width:20.6px;height:11.6px;background:#c8c8c8"></div>
<svg class="a" style="left:901.5px;top:571px;" width="9" height="9" viewBox="0 0 9 9"><rect x="1" y="0.6" width="7" height="7.4" fill="none" stroke="#777" stroke-width="0.7"/><rect x="2.6" y="2" width="3.8" height="3" fill="#999"/><path d="M0.4 8.2 H8.6" stroke="#777" stroke-width="0.8"/></svg>
<svg class="a" style="left:923px;top:571px;" width="9" height="9" viewBox="0 0 9 9"><rect x="0.6" y="0.8" width="3.2" height="2.6" fill="none" stroke="#777" stroke-width="0.7"/><rect x="5" y="0.8" width="3.2" height="2.6" fill="none" stroke="#777" stroke-width="0.7"/><rect x="0.6" y="5" width="3.2" height="2.6" fill="none" stroke="#777" stroke-width="0.7"/><rect x="5" y="5" width="3.2" height="2.6" fill="none" stroke="#777" stroke-width="0.7"/></svg>
<svg class="a" style="left:944px;top:571px;" width="9" height="9" viewBox="0 0 9 9"><path d="M0.8 1.2 L3.8 0.6 V8 L0.8 7.6Z M4.6 0.6 L7.8 1.2 V7.6 L4.6 8Z" fill="#bdbdbd" stroke="#888" stroke-width="0.6"/></svg>
<svg class="a" style="left:966px;top:571px;" width="9" height="9" viewBox="0 0 9 9"><path d="M0.5 1 H8.3" stroke="#777" stroke-width="0.8"/><rect x="1.2" y="1.4" width="6.4" height="3.8" fill="none" stroke="#777" stroke-width="0.7"/><path d="M4.4 5.2 V7.4 M2.6 8.2 H6.2" stroke="#777" stroke-width="0.7"/></svg>
<div class="a" style="left:983.6px;top:575.2px;width:3px;height:0.9px;background:#555"></div>
<div class="a" style="left:989.5px;top:575.4px;width:56.5px;height:0.6px;background:#a8a8a8"></div>
<div class="a" style="left:1016.6px;top:572.3px;width:3.2px;height:6px;background:#666"></div>
<svg class="a" style="left:1047px;top:572.5px;" width="6" height="6" viewBox="0 0 6 6"><path d="M3 0.5 V5.5 M0.5 3 H5.5" stroke="#444" stroke-width="0.9"/></svg>
<div class="a" style="left:1058.79px;top:570.79px;font-size:7.2px;line-height:9px;color:#444;transform:scaleX(0.8130);transform-origin:0 0;">106%</div>
<svg class="a" style="left:1081px;top:571px;" width="9" height="9" viewBox="0 0 9 9"><rect x="0.6" y="0.6" width="7.8" height="7.8" fill="none" stroke="#777" stroke-width="0.7"/><path d="M2 2 L3.6 3.6 M7 2 L5.4 3.6 M2 7 L3.6 5.4 M7 7 L5.4 5.4" stroke="#777" stroke-width="0.7"/></svg>
</body></html>
